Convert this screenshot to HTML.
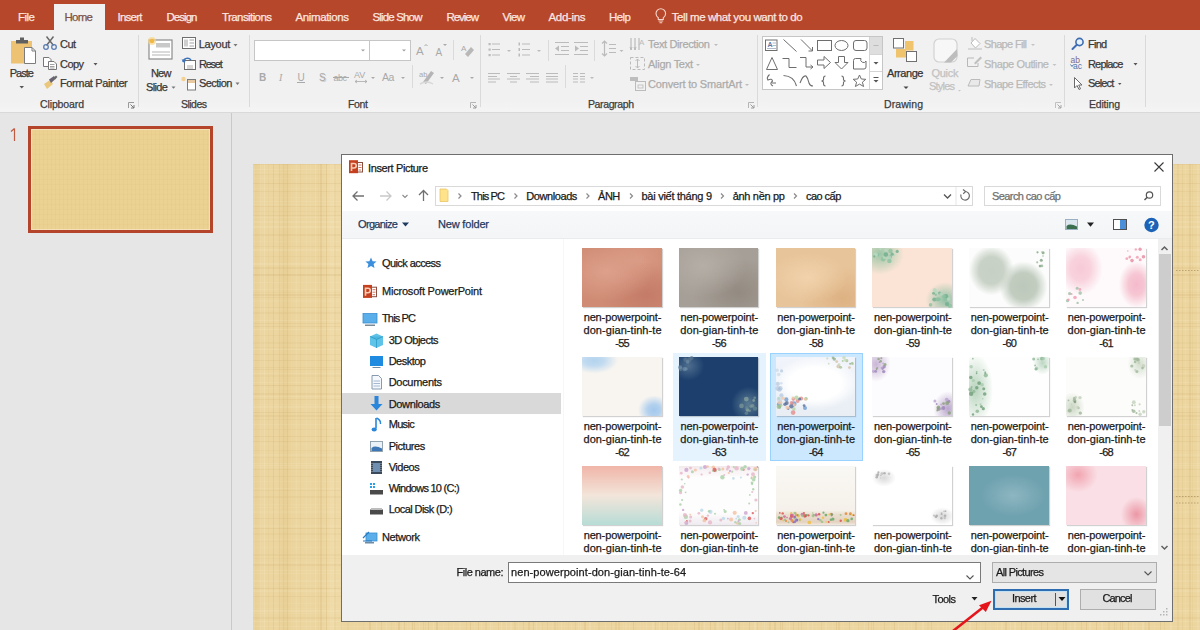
<!DOCTYPE html>
<html><head><meta charset="utf-8">
<style>
*{margin:0;padding:0;box-sizing:border-box}
html,body{width:1200px;height:630px;overflow:hidden;background:#E6E6E6;font-family:"Liberation Sans",sans-serif;position:relative}
.a{position:absolute}
.t{position:absolute;white-space:nowrap;line-height:1;-webkit-text-stroke:0.25px currentColor}
svg{position:absolute;overflow:visible}
</style></head><body>
<div class="a" style="left:0px;top:0px;width:1200px;height:30px;background:#B7472A"></div>
<div class="a" style="left:0px;top:30px;width:1200px;height:82px;background:linear-gradient(#F1F1F1 0,#F1F1F1 70px,#F4F4F4 81px)"></div>
<div class="a" style="left:0px;top:112px;width:1200px;height:1px;background:#D9D9D9"></div>
<div class="a" style="left:54px;top:4px;width:51px;height:27px;background:#F1F1F1"></div>
<div class="t" style="left:18.00px;top:12.00px;font-size:11.5px;color:#FAE6E0;letter-spacing:-0.505px;">File</div>
<div class="t" style="left:117.50px;top:12.00px;font-size:11.5px;color:#FAE6E0;letter-spacing:-0.750px;">Insert</div>
<div class="t" style="left:166.50px;top:12.00px;font-size:11.5px;color:#FAE6E0;letter-spacing:-0.964px;">Design</div>
<div class="t" style="left:222.00px;top:12.00px;font-size:11.5px;color:#FAE6E0;letter-spacing:-0.583px;">Transitions</div>
<div class="t" style="left:295.50px;top:12.00px;font-size:11.5px;color:#FAE6E0;letter-spacing:-0.374px;">Animations</div>
<div class="t" style="left:372.50px;top:12.00px;font-size:11.5px;color:#FAE6E0;letter-spacing:-0.840px;">Slide Show</div>
<div class="t" style="left:446.50px;top:12.00px;font-size:11.5px;color:#FAE6E0;letter-spacing:-1.044px;">Review</div>
<div class="t" style="left:502.50px;top:12.00px;font-size:11.5px;color:#FAE6E0;letter-spacing:-0.742px;">View</div>
<div class="t" style="left:548.50px;top:12.00px;font-size:11.5px;color:#FAE6E0;letter-spacing:-0.331px;">Add-ins</div>
<div class="t" style="left:609.00px;top:12.00px;font-size:11.5px;color:#FAE6E0;letter-spacing:-0.544px;">Help</div>
<div class="t" style="left:671.70px;top:12.00px;font-size:11.5px;color:#FAE6E0;letter-spacing:-0.420px;">Tell me what you want to do</div>
<div class="t" style="left:64.50px;top:12.00px;font-size:11.5px;color:#7E5248;letter-spacing:-0.735px;">Home</div>
<svg style="left:0;top:0" width="1200" height="40"><path d="M658.3 19.5 V17.8 Q656 16.2 656 13.5 A4.8 4.8 0 0 1 665.6 13.5 Q665.6 16.2 663.3 17.8 V19.5 Z" fill="none" stroke="#F6D5CC" stroke-width="1.1"/><path d="M658.5 21 H663.2 M659.5 22.8 H662.2" stroke="#F6D5CC" stroke-width="1.1"/></svg>
<div class="a" style="left:138px;top:35px;width:1px;height:72px;background:#DADADA"></div>
<div class="a" style="left:249px;top:35px;width:1px;height:72px;background:#DADADA"></div>
<div class="a" style="left:480px;top:35px;width:1px;height:72px;background:#DADADA"></div>
<div class="a" style="left:757px;top:35px;width:1px;height:72px;background:#DADADA"></div>
<div class="a" style="left:1064px;top:35px;width:1px;height:72px;background:#DADADA"></div>
<div class="a" style="left:1145px;top:35px;width:1px;height:72px;background:#DADADA"></div>
<div class="t" style="left:40.00px;top:99.00px;font-size:10.5px;color:#3C3C3C;letter-spacing:-0.117px;">Clipboard</div>
<div class="t" style="left:181.00px;top:99.00px;font-size:10.5px;color:#3C3C3C;letter-spacing:-0.523px;">Slides</div>
<div class="t" style="left:348.00px;top:99.00px;font-size:10.5px;color:#3C3C3C;letter-spacing:-0.333px;">Font</div>
<div class="t" style="left:588.00px;top:99.00px;font-size:10.5px;color:#3C3C3C;letter-spacing:-0.379px;">Paragraph</div>
<div class="t" style="left:884.00px;top:99.00px;font-size:10.5px;color:#3C3C3C;letter-spacing:0.078px;">Drawing</div>
<div class="t" style="left:1089.00px;top:99.00px;font-size:10.5px;color:#3C3C3C;letter-spacing:-0.188px;">Editing</div>
<div class="a" style="left:231px;top:113px;width:1px;height:517px;background:#C9C9C9"></div>
<div class="a" style="left:28px;top:126px;width:185px;height:107px;border:3px solid #B4452B;background:repeating-linear-gradient(90deg,rgba(190,150,80,0.07) 0 1px,transparent 1px 4px),repeating-linear-gradient(0deg,rgba(190,150,80,0.05) 0 1px,transparent 1px 5px),#EBD293"></div>
<svg style="left:0;top:0" width="40" height="160"><path d="M14.5 128.5 V141 M11 131.5 L14.5 128.5" stroke="#BF5A43" stroke-width="1.2" fill="none"/></svg>
<div class="a" style="left:31px;top:129px;width:179px;height:101px;border:1px solid rgba(255,235,210,0.6)"></div>
<div class="a" style="left:253px;top:164px;width:1000px;height:500px;background:linear-gradient(90deg,transparent 0px,rgba(255,250,225,0.09) 0px 2px,transparent 2px,transparent 7px,rgba(255,250,225,0.12) 7px 8px,transparent 8px,transparent 9px,rgba(255,250,225,0.06) 9px 10px,transparent 10px,transparent 11px,rgba(255,250,225,0.16) 11px 12px,transparent 12px,transparent 15px,rgba(180,140,70,0.05) 15px 16px,transparent 16px,transparent 20px,rgba(180,140,70,0.13) 20px 21px,transparent 21px,transparent 26px,rgba(180,140,70,0.10) 26px 27px,transparent 27px,transparent 30px,rgba(180,140,70,0.09) 30px 31px,transparent 31px,transparent 34px,rgba(180,140,70,0.12) 34px 35px,transparent 35px,transparent 38px,rgba(255,250,225,0.04) 38px 39px,transparent 39px,transparent 43px,rgba(255,250,225,0.09) 43px 44px,transparent 44px,transparent 47px,rgba(180,140,70,0.07) 47px 48px,transparent 48px,transparent 53px,rgba(255,250,225,0.09) 53px 54px,transparent 54px,transparent 57px,rgba(255,250,225,0.08) 57px 58px,transparent 58px,transparent 62px,rgba(255,250,225,0.13) 62px 63px,transparent 63px,transparent 65px,rgba(180,140,70,0.04) 65px 66px,transparent 66px,transparent 67px,rgba(180,140,70,0.12) 67px 69px,transparent 69px,transparent 73px,rgba(180,140,70,0.16) 73px 74px,transparent 74px,transparent 77px,rgba(255,250,225,0.05) 77px 78px,transparent 78px,transparent 81px,rgba(180,140,70,0.07) 81px 83px,transparent 83px,transparent 88px,rgba(180,140,70,0.07) 88px 89px,transparent 89px,transparent 94px,rgba(180,140,70,0.05) 94px 96px,transparent 96px,transparent 101px,rgba(255,250,225,0.04) 101px 102px,transparent 102px,transparent 104px,rgba(255,250,225,0.05) 104px 105px,transparent 105px,transparent 110px,rgba(180,140,70,0.04) 110px 111px,transparent 111px,transparent 113px,rgba(255,250,225,0.06) 113px 114px,transparent 114px,transparent 116px,rgba(180,140,70,0.14) 116px 118px,transparent 118px,transparent 123px,rgba(255,250,225,0.15) 123px 124px,transparent 124px,transparent 128px,rgba(180,140,70,0.13) 128px 129px,transparent 129px,transparent 133px,rgba(255,250,225,0.15) 133px 134px,transparent 134px,transparent 138px,rgba(180,140,70,0.05) 138px 139px,transparent 139px,transparent 142px,rgba(255,250,225,0.07) 142px 143px,transparent 143px,transparent 145px,rgba(180,140,70,0.15) 145px 147px,transparent 147px,transparent 149px,rgba(255,250,225,0.11) 149px 150px,transparent 150px,transparent 151px,rgba(180,140,70,0.13) 151px 152px,transparent 152px,transparent 154px,rgba(255,250,225,0.07) 154px 155px,transparent 155px,transparent 157px,rgba(255,250,225,0.10) 157px 158px,transparent 158px,transparent 159px,rgba(180,140,70,0.15) 159px 160px,transparent 160px,transparent 161px,rgba(180,140,70,0.11) 161px 162px,transparent 162px,transparent 166px,rgba(255,250,225,0.12) 166px 167px,transparent 167px,transparent 170px,rgba(180,140,70,0.10) 170px 171px,transparent 171px,transparent 172px,rgba(180,140,70,0.05) 172px 173px,transparent 173px,transparent 175px,rgba(180,140,70,0.14) 175px 176px,transparent 176px,transparent 180px,rgba(255,250,225,0.15) 180px 181px,transparent 181px,transparent 183px,rgba(180,140,70,0.14) 183px 185px,transparent 185px,transparent 190px,rgba(255,250,225,0.09) 190px 191px,transparent 191px,transparent 195px,rgba(180,140,70,0.05) 195px 196px,transparent 196px,transparent 200px,rgba(255,250,225,0.13) 200px 201px,transparent 201px,transparent 206px,rgba(255,250,225,0.09) 206px 208px,transparent 208px,transparent 213px,rgba(180,140,70,0.08) 213px 214px,transparent 214px,transparent 217px,rgba(180,140,70,0.15) 217px 218px,transparent 218px,transparent 221px,rgba(255,250,225,0.07) 221px 222px,transparent 222px,transparent 225px,rgba(180,140,70,0.12) 225px 226px,transparent 226px,transparent 228px,rgba(255,250,225,0.12) 228px 229px,transparent 229px,transparent 232px,rgba(180,140,70,0.08) 232px 234px,transparent 234px,transparent 237px,rgba(255,250,225,0.14) 237px 238px,transparent 238px,transparent 239px,rgba(255,250,225,0.07) 239px 240px,transparent 240px,transparent 245px,rgba(180,140,70,0.10) 245px 246px,transparent 246px,transparent 248px,rgba(255,250,225,0.14) 248px 249px,transparent 249px,transparent 253px,rgba(255,250,225,0.15) 253px 254px,transparent 254px,transparent 257px,rgba(255,250,225,0.12) 257px 259px,transparent 259px,transparent 261px,rgba(180,140,70,0.07) 261px 263px,transparent 263px,transparent 265px,rgba(255,250,225,0.11) 265px 266px,transparent 266px,transparent 270px,rgba(180,140,70,0.12) 270px 271px,transparent 271px,transparent 275px,rgba(180,140,70,0.13) 275px 277px,transparent 277px,transparent 280px,rgba(180,140,70,0.14) 280px 281px,transparent 281px,transparent 283px,rgba(255,250,225,0.16) 283px 284px,transparent 284px,transparent 287px,rgba(255,250,225,0.07) 287px 288px,transparent 288px,transparent 289px,rgba(180,140,70,0.06) 289px 290px,transparent 290px,transparent 294px,rgba(180,140,70,0.09) 294px 295px,transparent 295px,transparent 299px,rgba(255,250,225,0.06) 299px 300px,transparent 300px,transparent 301px,rgba(180,140,70,0.09) 301px 303px,transparent 303px,transparent 304px,rgba(180,140,70,0.05) 304px 305px,transparent 305px,transparent 308px,rgba(255,250,225,0.16) 308px 309px,transparent 309px,transparent 311px,rgba(255,250,225,0.07) 311px 312px,transparent 312px,transparent 315px,rgba(180,140,70,0.04) 315px 316px,transparent 316px,transparent 318px,rgba(255,250,225,0.10) 318px 319px,transparent 319px,transparent 322px,rgba(180,140,70,0.09) 322px 323px,transparent 323px,transparent 325px,rgba(255,250,225,0.12) 325px 326px,transparent 326px,transparent 327px,rgba(255,250,225,0.15) 327px 328px,transparent 328px,transparent 331px,rgba(180,140,70,0.13) 331px 333px,transparent 333px,transparent 336px,rgba(255,250,225,0.14) 336px 338px,transparent 338px,transparent 341px,rgba(255,250,225,0.08) 341px 342px,transparent 342px,transparent 345px,rgba(180,140,70,0.08) 345px 347px,transparent 347px,transparent 352px,rgba(255,250,225,0.11) 352px 353px,transparent 353px,transparent 358px,rgba(180,140,70,0.10) 358px 359px,transparent 359px,transparent 362px,rgba(180,140,70,0.10) 362px 364px,transparent 364px,transparent 365px,rgba(180,140,70,0.10) 365px 367px,transparent 367px,transparent 370px,rgba(255,250,225,0.09) 370px 371px,transparent 371px,transparent 372px,rgba(255,250,225,0.10) 372px 374px,transparent 374px,transparent 376px,rgba(255,250,225,0.10) 376px 377px,transparent 377px,transparent 380px,rgba(180,140,70,0.15) 380px 381px,transparent 381px,transparent 382px,rgba(180,140,70,0.04) 382px 383px,transparent 383px,transparent 387px,rgba(255,250,225,0.08) 387px 388px,transparent 388px,transparent 390px,rgba(255,250,225,0.05) 390px 391px,transparent 391px,transparent 393px,rgba(255,250,225,0.13) 393px 394px,transparent 394px,transparent 399px,rgba(255,250,225,0.14) 399px 401px,transparent 401px,transparent 402px,rgba(180,140,70,0.10) 402px 403px,transparent 403px,transparent 406px,rgba(255,250,225,0.15) 406px 407px,transparent 407px,transparent 409px,rgba(180,140,70,0.07) 409px 410px,transparent 410px,transparent 414px,rgba(180,140,70,0.15) 414px 415px,transparent 415px,transparent 420px,rgba(255,250,225,0.09) 420px 421px,transparent 421px,transparent 425px,rgba(255,250,225,0.11) 425px 427px,transparent 427px,transparent 432px,rgba(180,140,70,0.05) 432px 433px,transparent 433px,transparent 435px,rgba(255,250,225,0.05) 435px 436px,transparent 436px,transparent 441px,rgba(180,140,70,0.14) 441px 442px,transparent 442px,transparent 445px,rgba(180,140,70,0.13) 445px 447px,transparent 447px,transparent 448px,rgba(180,140,70,0.05) 448px 450px,transparent 450px,transparent 451px,rgba(255,250,225,0.15) 451px 452px,transparent 452px,transparent 457px,rgba(180,140,70,0.15) 457px 458px,transparent 458px,transparent 461px,rgba(180,140,70,0.08) 461px 463px,transparent 463px,transparent 464px,rgba(255,250,225,0.09) 464px 466px,transparent 466px,transparent 469px,rgba(180,140,70,0.14) 469px 470px,transparent 470px,transparent 471px,rgba(255,250,225,0.13) 471px 472px,transparent 472px,transparent 475px,rgba(180,140,70,0.05) 475px 477px,transparent 477px,transparent 482px,rgba(180,140,70,0.14) 482px 483px,transparent 483px,transparent 485px,rgba(180,140,70,0.10) 485px 487px,transparent 487px,transparent 490px,rgba(255,250,225,0.07) 490px 491px,transparent 491px,transparent 496px,rgba(180,140,70,0.14) 496px 497px,transparent 497px,transparent 501px,rgba(255,250,225,0.15) 501px 503px,transparent 503px,transparent 504px,rgba(180,140,70,0.09) 504px 505px,transparent 505px,transparent 509px,rgba(255,250,225,0.08) 509px 510px,transparent 510px,transparent 511px,rgba(255,250,225,0.16) 511px 512px,transparent 512px,transparent 513px,rgba(255,250,225,0.08) 513px 514px,transparent 514px,transparent 516px,rgba(180,140,70,0.09) 516px 518px,transparent 518px,transparent 521px,rgba(180,140,70,0.13) 521px 523px,transparent 523px,transparent 527px,rgba(180,140,70,0.13) 527px 528px,transparent 528px,transparent 529px,rgba(180,140,70,0.13) 529px 530px,transparent 530px,transparent 533px,rgba(255,250,225,0.07) 533px 535px,transparent 535px,transparent 536px,rgba(255,250,225,0.16) 536px 537px,transparent 537px,transparent 540px,rgba(180,140,70,0.11) 540px 541px,transparent 541px,transparent 545px,rgba(180,140,70,0.09) 545px 546px,transparent 546px,transparent 548px,rgba(180,140,70,0.09) 548px 549px,transparent 549px,transparent 554px,rgba(255,250,225,0.11) 554px 556px,transparent 556px,transparent 559px,rgba(255,250,225,0.12) 559px 560px,transparent 560px,transparent 563px,rgba(255,250,225,0.04) 563px 564px,transparent 564px,transparent 568px,rgba(180,140,70,0.09) 568px 569px,transparent 569px,transparent 572px,rgba(255,250,225,0.13) 572px 574px,transparent 574px,transparent 575px,rgba(255,250,225,0.05) 575px 576px,transparent 576px,transparent 579px,rgba(255,250,225,0.07) 579px 580px,transparent 580px,transparent 583px,rgba(180,140,70,0.15) 583px 584px,transparent 584px,transparent 585px,rgba(180,140,70,0.11) 585px 587px,transparent 587px,transparent 588px,rgba(255,250,225,0.09) 588px 589px,transparent 589px,transparent 590px,rgba(255,250,225,0.10) 590px 591px,transparent 591px,transparent 596px,rgba(180,140,70,0.12) 596px 597px,transparent 597px,transparent 599px,rgba(255,250,225,0.08) 599px 601px,transparent 601px,transparent 605px,rgba(180,140,70,0.07) 605px 606px,transparent 606px,transparent 611px,rgba(255,250,225,0.13) 611px 612px,transparent 612px,transparent 615px,rgba(180,140,70,0.12) 615px 616px,transparent 616px,transparent 618px,rgba(180,140,70,0.10) 618px 619px,transparent 619px,transparent 620px,rgba(180,140,70,0.12) 620px 621px,transparent 621px,transparent 626px,rgba(255,250,225,0.04) 626px 627px,transparent 627px,transparent 629px,rgba(255,250,225,0.05) 629px 630px,transparent 630px,transparent 631px,rgba(180,140,70,0.11) 631px 632px,transparent 632px,transparent 637px,rgba(255,250,225,0.07) 637px 638px,transparent 638px,transparent 641px,rgba(180,140,70,0.14) 641px 642px,transparent 642px,transparent 645px,rgba(255,250,225,0.14) 645px 646px,transparent 646px,transparent 651px,rgba(255,250,225,0.09) 651px 652px,transparent 652px,transparent 655px,rgba(255,250,225,0.07) 655px 656px,transparent 656px,transparent 658px,rgba(255,250,225,0.11) 658px 659px,transparent 659px,transparent 662px,rgba(180,140,70,0.11) 662px 664px,transparent 664px,transparent 669px,rgba(255,250,225,0.14) 669px 671px,transparent 671px,transparent 674px,rgba(180,140,70,0.05) 674px 676px,transparent 676px,transparent 678px,rgba(180,140,70,0.12) 678px 679px,transparent 679px,transparent 684px,rgba(255,250,225,0.07) 684px 686px,transparent 686px,transparent 690px,rgba(255,250,225,0.08) 690px 691px,transparent 691px,transparent 693px,rgba(255,250,225,0.11) 693px 694px,transparent 694px,transparent 696px,rgba(255,250,225,0.09) 696px 697px,transparent 697px,transparent 700px,rgba(180,140,70,0.05) 700px 701px,transparent 701px,transparent 703px,rgba(255,250,225,0.11) 703px 704px,transparent 704px,transparent 705px,rgba(255,250,225,0.14) 705px 706px,transparent 706px,transparent 710px,rgba(180,140,70,0.06) 710px 711px,transparent 711px,transparent 716px,rgba(255,250,225,0.14) 716px 718px,transparent 718px,transparent 723px,rgba(180,140,70,0.11) 723px 724px,transparent 724px,transparent 727px,rgba(255,250,225,0.05) 727px 728px,transparent 728px,transparent 732px,rgba(180,140,70,0.08) 732px 733px,transparent 733px,transparent 737px,rgba(255,250,225,0.05) 737px 738px,transparent 738px,transparent 742px,rgba(255,250,225,0.07) 742px 743px,transparent 743px,transparent 744px,rgba(255,250,225,0.13) 744px 745px,transparent 745px,transparent 748px,rgba(255,250,225,0.12) 748px 750px,transparent 750px,transparent 752px,rgba(180,140,70,0.12) 752px 754px,transparent 754px,transparent 757px,rgba(255,250,225,0.14) 757px 758px,transparent 758px,transparent 761px,rgba(255,250,225,0.15) 761px 763px,transparent 763px,transparent 768px,rgba(180,140,70,0.14) 768px 769px,transparent 769px,transparent 772px,rgba(180,140,70,0.07) 772px 774px,transparent 774px,transparent 779px,rgba(255,250,225,0.12) 779px 780px,transparent 780px,transparent 785px,rgba(255,250,225,0.10) 785px 786px,transparent 786px,transparent 788px,rgba(180,140,70,0.10) 788px 789px,transparent 789px,transparent 794px,rgba(180,140,70,0.13) 794px 795px,transparent 795px,transparent 797px,rgba(255,250,225,0.04) 797px 798px,transparent 798px,transparent 803px,rgba(180,140,70,0.08) 803px 805px,transparent 805px,transparent 810px,rgba(180,140,70,0.11) 810px 811px,transparent 811px,transparent 812px,rgba(180,140,70,0.09) 812px 814px,transparent 814px,transparent 817px,rgba(255,250,225,0.12) 817px 818px,transparent 818px,transparent 821px,rgba(255,250,225,0.15) 821px 823px,transparent 823px,transparent 828px,rgba(180,140,70,0.10) 828px 829px,transparent 829px,transparent 833px,rgba(180,140,70,0.15) 833px 834px,transparent 834px,transparent 836px,rgba(255,250,225,0.13) 836px 838px,transparent 838px,transparent 843px,rgba(180,140,70,0.15) 843px 844px,transparent 844px,transparent 848px,rgba(255,250,225,0.14) 848px 850px,transparent 850px,transparent 855px,rgba(180,140,70,0.09) 855px 857px,transparent 857px,transparent 861px,rgba(180,140,70,0.12) 861px 862px,transparent 862px,transparent 863px,rgba(180,140,70,0.06) 863px 864px,transparent 864px,transparent 867px,rgba(180,140,70,0.14) 867px 868px,transparent 868px,transparent 869px,rgba(180,140,70,0.15) 869px 870px,transparent 870px,transparent 872px,rgba(255,250,225,0.04) 872px 874px,transparent 874px,transparent 875px,rgba(180,140,70,0.13) 875px 876px,transparent 876px,transparent 879px,rgba(255,250,225,0.10) 879px 881px,transparent 881px,transparent 883px,rgba(255,250,225,0.08) 883px 884px,transparent 884px,transparent 889px,rgba(255,250,225,0.16) 889px 891px,transparent 891px,transparent 892px,rgba(180,140,70,0.05) 892px 893px,transparent 893px,transparent 895px,rgba(180,140,70,0.12) 895px 897px,transparent 897px,transparent 901px,rgba(255,250,225,0.07) 901px 902px,transparent 902px,transparent 907px,rgba(180,140,70,0.14) 907px 908px,transparent 908px,transparent 911px,rgba(180,140,70,0.07) 911px 912px,transparent 912px,transparent 917px,rgba(255,250,225,0.15) 917px 919px,transparent 919px,transparent 924px,rgba(180,140,70,0.07) 924px 926px,transparent 926px,transparent 929px,rgba(180,140,70,0.08) 929px 930px,transparent 930px,transparent 932px,rgba(255,250,225,0.09) 932px 933px,transparent 933px,transparent 936px,rgba(180,140,70,0.11) 936px 938px,transparent 938px,transparent 939px,rgba(180,140,70,0.06) 939px 940px,transparent 940px,transparent 944px,rgba(255,250,225,0.11) 944px 946px,transparent 946px,transparent 947px,rgba(180,140,70,0.06) 947px 948px,transparent 948px,transparent 949px,rgba(180,140,70,0.08) 949px 950px,transparent 950px,transparent 953px,rgba(180,140,70,0.12) 953px 955px,transparent 955px,transparent 960px,rgba(255,250,225,0.10) 960px 961px,transparent 961px,transparent 966px,rgba(255,250,225,0.11) 966px 968px,transparent 968px,transparent 972px,rgba(180,140,70,0.12) 972px 973px,transparent 973px,transparent 978px,rgba(180,140,70,0.08) 978px 979px,transparent 979px,transparent 981px,rgba(255,250,225,0.06) 981px 983px,transparent 983px,transparent 984px,rgba(180,140,70,0.11) 984px 985px,transparent 985px,transparent 989px,rgba(255,250,225,0.11) 989px 990px,transparent 990px,transparent 992px,rgba(180,140,70,0.11) 992px 993px,transparent 993px,transparent 997px,rgba(180,140,70,0.11) 997px 998px,transparent 998px),linear-gradient(180deg,transparent 0px,rgba(180,140,70,0.11) 0px 1px,transparent 1px,transparent 5px,rgba(255,250,225,0.10) 5px 6px,transparent 6px,transparent 8px,rgba(255,250,225,0.06) 8px 9px,transparent 9px,transparent 10px,rgba(180,140,70,0.06) 10px 11px,transparent 11px,transparent 14px,rgba(255,250,225,0.06) 14px 15px,transparent 15px,transparent 19px,rgba(180,140,70,0.12) 19px 20px,transparent 20px,transparent 24px,rgba(255,250,225,0.06) 24px 25px,transparent 25px,transparent 27px,rgba(180,140,70,0.09) 27px 28px,transparent 28px,transparent 33px,rgba(255,250,225,0.06) 33px 34px,transparent 34px,transparent 37px,rgba(255,250,225,0.10) 37px 38px,transparent 38px,transparent 40px,rgba(255,250,225,0.08) 40px 41px,transparent 41px,transparent 42px,rgba(180,140,70,0.09) 42px 43px,transparent 43px,transparent 47px,rgba(180,140,70,0.06) 47px 48px,transparent 48px,transparent 51px,rgba(180,140,70,0.10) 51px 52px,transparent 52px,transparent 53px,rgba(255,250,225,0.09) 53px 54px,transparent 54px,transparent 57px,rgba(255,250,225,0.11) 57px 59px,transparent 59px,transparent 62px,rgba(255,250,225,0.12) 62px 64px,transparent 64px,transparent 70px,rgba(180,140,70,0.09) 70px 72px,transparent 72px,transparent 77px,rgba(255,250,225,0.08) 77px 78px,transparent 78px,transparent 82px,rgba(180,140,70,0.07) 82px 83px,transparent 83px,transparent 85px,rgba(255,250,225,0.11) 85px 87px,transparent 87px,transparent 92px,rgba(180,140,70,0.06) 92px 93px,transparent 93px,transparent 99px,rgba(255,250,225,0.13) 99px 101px,transparent 101px,transparent 103px,rgba(180,140,70,0.09) 103px 105px,transparent 105px,transparent 110px,rgba(180,140,70,0.13) 110px 112px,transparent 112px,transparent 118px,rgba(255,250,225,0.09) 118px 119px,transparent 119px,transparent 125px,rgba(255,250,225,0.09) 125px 126px,transparent 126px,transparent 128px,rgba(180,140,70,0.05) 128px 129px,transparent 129px,transparent 130px,rgba(180,140,70,0.11) 130px 132px,transparent 132px,transparent 133px,rgba(180,140,70,0.08) 133px 134px,transparent 134px,transparent 136px,rgba(255,250,225,0.05) 136px 138px,transparent 138px,transparent 143px,rgba(180,140,70,0.08) 143px 144px,transparent 144px,transparent 145px,rgba(255,250,225,0.05) 145px 146px,transparent 146px,transparent 148px,rgba(180,140,70,0.07) 148px 150px,transparent 150px,transparent 156px,rgba(255,250,225,0.12) 156px 157px,transparent 157px,transparent 159px,rgba(180,140,70,0.09) 159px 160px,transparent 160px,transparent 162px,rgba(180,140,70,0.10) 162px 163px,transparent 163px,transparent 165px,rgba(255,250,225,0.13) 165px 166px,transparent 166px,transparent 171px,rgba(180,140,70,0.07) 171px 172px,transparent 172px,transparent 178px,rgba(180,140,70,0.06) 178px 180px,transparent 180px,transparent 183px,rgba(180,140,70,0.06) 183px 184px,transparent 184px,transparent 185px,rgba(255,250,225,0.11) 185px 186px,transparent 186px,transparent 190px,rgba(180,140,70,0.09) 190px 191px,transparent 191px,transparent 196px,rgba(180,140,70,0.10) 196px 197px,transparent 197px,transparent 203px,rgba(180,140,70,0.08) 203px 204px,transparent 204px,transparent 205px,rgba(180,140,70,0.09) 205px 206px,transparent 206px,transparent 209px,rgba(255,250,225,0.09) 209px 210px,transparent 210px,transparent 211px,rgba(180,140,70,0.05) 211px 213px,transparent 213px,transparent 218px,rgba(255,250,225,0.11) 218px 219px,transparent 219px,transparent 221px,rgba(180,140,70,0.13) 221px 222px,transparent 222px,transparent 224px,rgba(255,250,225,0.04) 224px 225px,transparent 225px,transparent 229px,rgba(180,140,70,0.09) 229px 231px,transparent 231px,transparent 232px,rgba(255,250,225,0.11) 232px 233px,transparent 233px,transparent 235px,rgba(180,140,70,0.09) 235px 236px,transparent 236px,transparent 240px,rgba(255,250,225,0.06) 240px 241px,transparent 241px,transparent 242px,rgba(255,250,225,0.11) 242px 244px,transparent 244px,transparent 248px,rgba(180,140,70,0.12) 248px 249px,transparent 249px,transparent 251px,rgba(180,140,70,0.09) 251px 253px,transparent 253px,transparent 255px,rgba(180,140,70,0.07) 255px 256px,transparent 256px,transparent 260px,rgba(255,250,225,0.09) 260px 261px,transparent 261px,transparent 265px,rgba(180,140,70,0.05) 265px 266px,transparent 266px,transparent 272px,rgba(180,140,70,0.10) 272px 273px,transparent 273px,transparent 277px,rgba(180,140,70,0.10) 277px 278px,transparent 278px,transparent 280px,rgba(255,250,225,0.05) 280px 281px,transparent 281px,transparent 286px,rgba(180,140,70,0.05) 286px 287px,transparent 287px,transparent 290px,rgba(255,250,225,0.08) 290px 292px,transparent 292px,transparent 293px,rgba(180,140,70,0.05) 293px 294px,transparent 294px,transparent 299px,rgba(255,250,225,0.09) 299px 300px,transparent 300px,transparent 301px,rgba(255,250,225,0.12) 301px 302px,transparent 302px,transparent 303px,rgba(255,250,225,0.08) 303px 304px,transparent 304px,transparent 305px,rgba(180,140,70,0.07) 305px 306px,transparent 306px,transparent 312px,rgba(180,140,70,0.08) 312px 313px,transparent 313px,transparent 317px,rgba(255,250,225,0.07) 317px 318px,transparent 318px,transparent 324px,rgba(255,250,225,0.09) 324px 325px,transparent 325px,transparent 326px,rgba(180,140,70,0.08) 326px 327px,transparent 327px,transparent 332px,rgba(180,140,70,0.07) 332px 334px,transparent 334px,transparent 340px,rgba(255,250,225,0.06) 340px 341px,transparent 341px,transparent 343px,rgba(255,250,225,0.06) 343px 344px,transparent 344px,transparent 347px,rgba(255,250,225,0.08) 347px 349px,transparent 349px,transparent 354px,rgba(180,140,70,0.09) 354px 355px,transparent 355px,transparent 361px,rgba(255,250,225,0.07) 361px 363px,transparent 363px,transparent 364px,rgba(180,140,70,0.11) 364px 365px,transparent 365px,transparent 369px,rgba(180,140,70,0.06) 369px 371px,transparent 371px,transparent 375px,rgba(255,250,225,0.05) 375px 376px,transparent 376px,transparent 377px,rgba(180,140,70,0.04) 377px 378px,transparent 378px,transparent 383px,rgba(255,250,225,0.05) 383px 384px,transparent 384px,transparent 390px,rgba(180,140,70,0.07) 390px 392px,transparent 392px,transparent 394px,rgba(180,140,70,0.05) 394px 395px,transparent 395px,transparent 398px,rgba(255,250,225,0.08) 398px 399px,transparent 399px,transparent 400px,rgba(180,140,70,0.09) 400px 402px,transparent 402px,transparent 406px,rgba(255,250,225,0.10) 406px 407px,transparent 407px,transparent 409px,rgba(255,250,225,0.09) 409px 410px,transparent 410px,transparent 416px,rgba(255,250,225,0.09) 416px 418px,transparent 418px,transparent 421px,rgba(255,250,225,0.07) 421px 422px,transparent 422px,transparent 424px,rgba(180,140,70,0.11) 424px 425px,transparent 425px,transparent 426px,rgba(255,250,225,0.10) 426px 428px,transparent 428px,transparent 432px,rgba(180,140,70,0.09) 432px 433px,transparent 433px,transparent 439px,rgba(255,250,225,0.06) 439px 440px,transparent 440px,transparent 444px,rgba(255,250,225,0.05) 444px 445px,transparent 445px,transparent 446px,rgba(255,250,225,0.12) 446px 448px,transparent 448px,transparent 449px,rgba(255,250,225,0.06) 449px 450px,transparent 450px,transparent 453px,rgba(180,140,70,0.07) 453px 455px,transparent 455px,transparent 457px,rgba(255,250,225,0.12) 457px 458px,transparent 458px,transparent 462px,rgba(255,250,225,0.10) 462px 463px,transparent 463px,transparent 466px,rgba(180,140,70,0.12) 466px 467px,transparent 467px,transparent 472px,rgba(180,140,70,0.12) 472px 473px,transparent 473px,transparent 476px,rgba(255,250,225,0.12) 476px 477px,transparent 477px,transparent 478px,rgba(255,250,225,0.12) 478px 479px,transparent 479px,transparent 482px,rgba(255,250,225,0.07) 482px 483px,transparent 483px,transparent 484px,rgba(255,250,225,0.11) 484px 485px,transparent 485px,transparent 489px,rgba(255,250,225,0.10) 489px 490px,transparent 490px,transparent 494px,rgba(180,140,70,0.11) 494px 495px,transparent 495px,transparent 496px,rgba(255,250,225,0.10) 496px 497px,transparent 497px),linear-gradient(90deg,rgba(215,180,105,0.20) 0,transparent 10px,transparent 24px,rgba(215,180,105,0.18) 32px,transparent 42px,transparent 70px,rgba(255,245,210,0.2) 80px,transparent 92px),#ECD59F"></div>
<svg style="left:0;top:0" width="1200" height="630"><path d="M1176 270.5 H1200 M1176 496.5 H1200 M1176 503 H1200" stroke="#A89060" stroke-width="1" stroke-dasharray="1.5 1.5" opacity="0.7"/></svg>
<div class="a" style="left:341px;top:154px;width:832px;height:468px;background:#fff;border:1px solid #6E6E6E"></div>
<svg style="left:0;top:0" width="1200" height="112" viewBox="0 0 1200 112">
<g id="clip">
 <rect x="11" y="41" width="21" height="22.5" fill="#EDC272"/>
 <path d="M16 43.5 L16 40 L20 40 L20 37.5 L24 37.5 L24 40 L28 40 L28 43.5 Z" fill="#606060"/>
 <path d="M24.5 47.5 H32 L35.5 51 V63.5 H24.5 Z" fill="#fff" stroke="#7C7C7C" stroke-width="1"/>
 <path d="M32 47.5 V51 H35.5" fill="none" stroke="#7C7C7C" stroke-width="1"/>
 <path d="M19.5 86 H24 L21.75 88.5 Z" fill="#555"/>
 <!-- scissors -->
 <path d="M46.5 36.5 L53.5 45.5 M53.5 36.5 L46.5 45.5" stroke="#6A6A6A" stroke-width="1.5" fill="none"/>
 <circle cx="46" cy="47" r="2.3" fill="none" stroke="#5B7DB3" stroke-width="1.3"/>
 <circle cx="54" cy="47" r="2.3" fill="none" stroke="#5B7DB3" stroke-width="1.3"/>
 <!-- copy -->
 <path d="M43.5 57.5 H49 L51 59.5 V66.5 H43.5 Z" fill="#fff" stroke="#777" stroke-width="1"/>
 <path d="M48.5 61.5 H54 L56.5 64 V69.5 H48.5 Z" fill="#fff" stroke="#777" stroke-width="1"/>
 <path d="M50 64.5 H54.5 M50 66.5 H54.5 M50 68 H54.5" stroke="#8a8a8a" stroke-width="0.8"/>
 <path d="M93.5 63 H97.5 L95.5 65.5 Z" fill="#555"/>
 <!-- format painter -->
 <path d="M44 84 L50 80 L53 84 L47 89 Z" fill="#EAC77A"/>
 <path d="M49 79.5 L54 76 L56 78.5 L51 83 Z" fill="#6A6470"/>
 <path d="M53.5 78 L56 75.5 L57.5 77 L55 79.5 Z" fill="#6A6A6A"/>
 <!-- launcher -->
 <path d="M128.5 108 V102.5 H134 " fill="none" stroke="#9A9A9A" stroke-width="1"/>
 <path d="M130.5 104.5 L134 108 M131 108 H134 V105" fill="none" stroke="#777" stroke-width="1"/>
</g>
<g id="slides">
 <rect x="149" y="40" width="23" height="19" fill="#fff" stroke="#8C8C8C" stroke-width="1.2"/>
 <rect x="156" y="43" width="14" height="4.5" fill="#C9C9C9"/>
 <path d="M152 52 H170 M152 55 H170" stroke="#B5B5B5" stroke-width="1"/>
 <circle cx="152" cy="41" r="4" fill="#F7D58A" opacity="0.7"/>
 <circle cx="152" cy="41" r="2.2" fill="#F2B844"/>
 <path d="M171.5 86.5 H175.5 L173.5 88.7 Z" fill="#777"/>
 <!-- layout -->
 <rect x="182.5" y="37.5" width="13" height="11" fill="#fff" stroke="#6E6E6E" stroke-width="1"/>
 <rect x="184" y="39.5" width="4" height="7" fill="#CFCFCF"/>
 <path d="M189.5 40 H194 M189.5 43 H194 M189.5 46 H194" stroke="#8A8A8A" stroke-width="0.8"/>
 <path d="M233.5 44 H237.5 L235.5 46.5 Z" fill="#777"/>
 <!-- reset -->
 <rect x="184.5" y="60.5" width="11" height="9" fill="#fff" stroke="#6E6E6E" stroke-width="1"/>
 <path d="M187 66 H193 M187 68 H193" stroke="#9A9A9A" stroke-width="0.8"/>
 <path d="M183 62 A4.5 4.5 0 0 1 191 60" fill="none" stroke="#3F73B8" stroke-width="1.5"/>
 <path d="M181.5 59.5 L184.5 63.5 L186 59.5 Z" fill="#3F73B8"/>
 <!-- section -->
 <rect x="187.5" y="79.5" width="8" height="10.5" fill="#fff" stroke="#7A7A7A" stroke-width="1"/>
 <rect x="188" y="80" width="7" height="3" fill="#E8C9A0"/>
 <circle cx="183.5" cy="79" r="2.2" fill="#F4C97A" opacity="0.8"/>
 <path d="M235.5 82.5 H239.5 L237.5 85 Z" fill="#777"/>
</g>
</svg>
<div class="t" style="left:9.80px;top:68.00px;font-size:11px;color:#383838;letter-spacing:-1.026px;">Paste</div>
<div class="t" style="left:60.00px;top:39.00px;font-size:11px;color:#383838;letter-spacing:-0.553px;">Cut</div>
<div class="t" style="left:60.00px;top:59.00px;font-size:11px;color:#383838;letter-spacing:-0.562px;">Copy</div>
<div class="t" style="left:60.00px;top:78.00px;font-size:11px;color:#383838;letter-spacing:-0.382px;">Format Painter</div>
<div class="t" style="left:151.00px;top:68.00px;font-size:11px;color:#383838;letter-spacing:-0.828px;">New</div>
<div class="t" style="left:146.00px;top:82.00px;font-size:11px;color:#383838;letter-spacing:-0.619px;">Slide</div>
<div class="t" style="left:198.80px;top:39.00px;font-size:11px;color:#383838;letter-spacing:-0.311px;">Layout</div>
<div class="t" style="left:199.00px;top:59.00px;font-size:11px;color:#383838;letter-spacing:-1.253px;">Reset</div>
<div class="t" style="left:199.00px;top:78.00px;font-size:11px;color:#383838;letter-spacing:-0.548px;">Section</div>
<svg style="left:0;top:0" width="1200" height="112" viewBox="0 0 1200 112" font-family="Liberation Sans">
 <rect x="254.5" y="40.5" width="115" height="20" fill="#fff" stroke="#C6C6C6"/>
 <rect x="369.5" y="40.5" width="41" height="20" fill="#fff" stroke="#C6C6C6"/>
 <path d="M361 49.5 H365 L363 51.5 Z M402 49.5 H406 L404 51.5 Z" fill="#A0A0A0"/>
 <text x="416" y="55" font-size="11.5" fill="#A9A9A9">A</text>
 <path d="M424.5 46 L426 44.5 L427.5 46" stroke="#A9A9A9" fill="none"/>
 <text x="435.5" y="55.5" font-size="10" fill="#A9A9A9">A</text>
 <path d="M443 44 H447 L445 46 Z" fill="#A9A9A9"/>
 <rect x="453" y="40" width="1" height="20" fill="#DADADA"/>
 <text x="461" y="51" font-size="8" fill="#A9A9A9">A</text>
 <path d="M465 54 L471 47 L474 50 L468 57 Z" fill="#B8B8B8"/>
 <text x="259" y="80.5" font-size="10" font-weight="bold" fill="#A9A9A9">B</text>
 <text x="279" y="80.5" font-size="10" font-style="italic" font-family="Liberation Serif" fill="#A9A9A9">I</text>
 <text x="297.5" y="80.5" font-size="10" fill="#A9A9A9">U</text>
 <rect x="297" y="82" width="8" height="1" fill="#A9A9A9"/>
 <text x="320" y="81.5" font-size="10" fill="#CFCFCF">S</text>
 <text x="319" y="80.5" font-size="10" fill="#A9A9A9">S</text>
 <text x="333.5" y="80.5" font-size="9" fill="#A9A9A9" letter-spacing="-0.5">abc</text>
 <rect x="333" y="77" width="16" height="1" fill="#A9A9A9"/>
 <text x="354" y="78" font-size="9" fill="#A9A9A9">AV</text>
 <path d="M355 81.5 H367 M355 81.5 L357 80 M355 81.5 L357 83 M367 81.5 L365 80 M367 81.5 L365 83" stroke="#A9A9A9" stroke-width="0.8" fill="none"/>
 <path d="M371 77 H375 L373 79 Z M401 77 H405 L403 79 Z" fill="#A9A9A9"/>
 <text x="382" y="81" font-size="10.5" fill="#A9A9A9" letter-spacing="-0.6">Aa</text>
 <rect x="412" y="65" width="1" height="23" fill="#DADADA"/>
 <text x="419" y="77" font-size="7.5" fill="#A9A9A9">ab</text>
 <path d="M423 82 L431 71 L434 73 L426 84 Z" fill="#B5B5B5"/>
 <path d="M420 84 Q427 80 433 84" stroke="#D8D8D8" stroke-width="1.5" fill="none"/>
 <path d="M440 77 H444 L442 79 Z M470 77 H474 L472 79 Z" fill="#A9A9A9"/>
 <text x="452" y="81.5" font-size="11.5" fill="#A9A9A9">A</text>
 <path d="M470.5 108 V102.5 H476" fill="none" stroke="#B5B5B5" stroke-width="1"/>
 <path d="M472.5 104.5 L476 108 M473 108 H476 V105" fill="none" stroke="#9a9a9a" stroke-width="1"/>
</svg>
<svg style="left:0;top:0" width="1200" height="112" viewBox="0 0 1200 112" font-family="Liberation Sans"><rect x="488.5" y="43" width="2.2" height="2.2" fill="#BBBBBB"/><rect x="492" y="43.5" width="8" height="1" fill="#BBBBBB"/><rect x="518.5" y="42.5" width="1.5" height="3" fill="#BBBBBB"/><rect x="522" y="43.5" width="8" height="1" fill="#BBBBBB"/><rect x="488.5" y="48.5" width="2.2" height="2.2" fill="#BBBBBB"/><rect x="492" y="49.0" width="8" height="1" fill="#BBBBBB"/><rect x="518.5" y="48.0" width="1.5" height="3" fill="#BBBBBB"/><rect x="522" y="49.0" width="8" height="1" fill="#BBBBBB"/><rect x="488.5" y="54" width="2.2" height="2.2" fill="#BBBBBB"/><rect x="492" y="54.5" width="8" height="1" fill="#BBBBBB"/><rect x="518.5" y="53.5" width="1.5" height="3" fill="#BBBBBB"/><rect x="522" y="54.5" width="8" height="1" fill="#BBBBBB"/><path d="M507 50 H511 L509 52 Z M537 50 H541 L539 52 Z M619.5 50 H623.5 L621.5 52 Z M590 77 H594 L592 79 Z" fill="#BBBBBB"/><rect x="548" y="40" width="1" height="21" fill="#DADADA"/><rect x="594" y="40" width="1" height="21" fill="#DADADA"/><rect x="565" y="65" width="1" height="23" fill="#DADADA"/><rect x="555" y="42" width="14" height="1" fill="#BBBBBB"/><rect x="561" y="46" width="8" height="1" fill="#BBBBBB"/><rect x="561" y="50" width="8" height="1" fill="#BBBBBB"/><rect x="555" y="54" width="14" height="1" fill="#BBBBBB"/><path d="M555 48.5 L559 45.5 V51.5 Z" fill="#BBBBBB"/><rect x="574" y="42" width="14" height="1" fill="#BBBBBB"/><rect x="580" y="46" width="8" height="1" fill="#BBBBBB"/><rect x="580" y="50" width="8" height="1" fill="#BBBBBB"/><rect x="574" y="54" width="14" height="1" fill="#BBBBBB"/><path d="M579 48.5 L575 45.5 V51.5 Z" fill="#BBBBBB"/><path d="M604.5 41 V56 M602 43.5 L604.5 41 L607 43.5 M602 53.5 L604.5 56 L607 53.5" stroke="#BBBBBB" fill="none" stroke-width="1.2"/><rect x="609" y="44" width="7" height="1" fill="#BBBBBB"/><rect x="609" y="48" width="7" height="1" fill="#BBBBBB"/><rect x="609" y="52" width="7" height="1" fill="#BBBBBB"/><rect x="488" y="73" width="12" height="1" fill="#BBBBBB"/><rect x="488" y="76" width="9" height="1" fill="#BBBBBB"/><rect x="488" y="78.5" width="12" height="1" fill="#BBBBBB"/><rect x="488" y="81.5" width="8" height="1" fill="#BBBBBB"/><rect x="507" y="73" width="13" height="1" fill="#BBBBBB"/><rect x="510" y="76" width="7" height="1" fill="#BBBBBB"/><rect x="507" y="78.5" width="13" height="1" fill="#BBBBBB"/><rect x="510" y="81.5" width="7" height="1" fill="#BBBBBB"/><rect x="526" y="73" width="13" height="1" fill="#BBBBBB"/><rect x="530" y="76" width="9" height="1" fill="#BBBBBB"/><rect x="526" y="78.5" width="13" height="1" fill="#BBBBBB"/><rect x="530" y="81.5" width="9" height="1" fill="#BBBBBB"/><rect x="546" y="73" width="12" height="1" fill="#BBBBBB"/><rect x="546" y="76" width="12" height="1" fill="#BBBBBB"/><rect x="546" y="78.5" width="12" height="1" fill="#BBBBBB"/><rect x="546" y="81.5" width="12" height="1" fill="#BBBBBB"/><rect x="573" y="73" width="5" height="1" fill="#BBBBBB"/><rect x="580" y="73" width="5" height="1" fill="#BBBBBB"/><rect x="573" y="76" width="5" height="1" fill="#BBBBBB"/><rect x="580" y="76" width="5" height="1" fill="#BBBBBB"/><rect x="573" y="78.5" width="5" height="1" fill="#BBBBBB"/><rect x="580" y="78.5" width="5" height="1" fill="#BBBBBB"/><rect x="573" y="81.5" width="5" height="1" fill="#BBBBBB"/><rect x="580" y="81.5" width="5" height="1" fill="#BBBBBB"/><path d="M631 38 V50 M635 38 V50 M639 38 V50" stroke="#BBBBBB" stroke-width="1.2"/><path d="M630 47 L631 50 L632 47 M634 47 L635 50 L636 47" stroke="#BBBBBB" fill="none"/><text x="639" y="45" font-size="8" fill="#BBBBBB" font-family="Liberation Sans">A</text><rect x="630.5" y="57.5" width="14" height="12" fill="none" stroke="#BBBBBB" stroke-dasharray="3 2"/><path d="M637.5 59 V68 M635.5 61 L637.5 59 L639.5 61 M635.5 66 L637.5 68 L639.5 66" stroke="#BBBBBB" fill="none"/><rect x="630" y="77" width="8" height="4" fill="#BDBDBD"/><rect x="635.5" y="81.5" width="10" height="9" fill="none" stroke="#BBBBBB"/><rect x="638" y="85" width="5" height="3" fill="none" stroke="#BBBBBB" stroke-width="0.8"/><path d="M748.5 108 V102.5 H754" fill="none" stroke="#B5B5B5"/><path d="M750.5 104.5 L754 108 M751 108 H754 V105" fill="none" stroke="#9a9a9a"/></svg>
<div class="t" style="left:648.00px;top:39.00px;font-size:11px;color:#ABABAB;letter-spacing:-0.358px;">Text Direction</div>
<div class="t" style="left:648.00px;top:59.00px;font-size:11px;color:#ABABAB;letter-spacing:-0.280px;">Align Text</div>
<div class="t" style="left:648.00px;top:79.00px;font-size:11px;color:#ABABAB;letter-spacing:-0.177px;">Convert to SmartArt</div>
<svg style="left:0;top:0" width="1200" height="112"><path d="M714 44 H718 L716 46 Z M696 64 H700 L698 66 Z M745 84 H749 L747 86 Z" fill="#BBBBBB"/></svg>
<svg style="left:0;top:0" width="1200" height="112" viewBox="0 0 1200 112" font-family="Liberation Sans">
 <rect x="762.5" y="36.5" width="120" height="53" fill="#fff" stroke="#C6C6C6"/>
 <rect x="869.5" y="37" width="12.5" height="17.5" fill="#DEDEDE"/>
 <path d="M869.5 37 V89 M869.5 54.5 H882 M869.5 71.5 H882" stroke="#D4D4D4" fill="none"/>
 <rect x="873.5" y="45" width="5" height="1" fill="#BBBBBB"/>
 <path d="M873.5 62 H878.5 L876 64.5 Z" fill="#555"/>
 <rect x="873.5" y="77" width="5" height="1" fill="#555"/>
 <path d="M873.5 80 H878.5 L876 82.5 Z" fill="#555"/>
 <g fill="none" stroke="#6E6E6E" stroke-width="1">
  <rect x="765.5" y="40" width="11.5" height="10.5"/>
  <path d="M783.5 39.5 L796.5 51.5"/>
  <path d="M801 39.5 L812.5 51 M812.5 47 V51 H808.5"/>
  <rect x="817.5" y="40.5" width="14" height="10"/>
  <ellipse cx="841.5" cy="45.5" rx="6.5" ry="5"/>
  <rect x="853.5" y="40.5" width="13.5" height="10" rx="2.5"/>
  <path d="M772 57.5 L766.5 69.5 H777.5 Z"/>
  <path d="M782.5 58.5 H789 V67.5 H796.5"/>
  <path d="M800 57.5 H806 V67 H813 M810.5 65 L813 67 L810.5 69"/>
  <path d="M817.5 60 H824 V56.5 L830.5 62.5 L824 68.5 V65 H817.5 Z"/>
  <path d="M838.5 56.5 H844.5 V62.5 H848 L841.5 69 L835 62.5 H838.5 Z"/>
  <path d="M853.5 69 V60.5 Q853.5 58.5 855.5 58.5 H861 A2.5 2.5 0 0 0 866 61 V67 Q866 69 864 69 Z"/>
  <path d="M769.5 74.5 Q766 78 768 80 Q772 78 772.5 81 Q769 84 773 86 M772 83 H776" stroke-width="1.1"/>
  <path d="M783.5 75.5 Q794 76 796.5 86" stroke-width="1.1"/>
  <path d="M800 83 Q803 75 806 76 Q808 78 809 83 Q810 86 813 86" stroke-width="1.1"/>
  <path d="M825.5 76 Q823.5 76 823.5 78.5 V80 L822 81 L823.5 82 V83.5 Q823.5 86 825.5 86" stroke-width="1.1"/>
  <path d="M841.5 76 Q843.5 76 843.5 78.5 V80 L845 81 L843.5 82 V83.5 Q843.5 86 841.5 86" stroke-width="1.1"/>
  <path d="M859.5 75 L861.3 79 L865.8 79.3 L862.4 82.2 L863.6 86.5 L859.5 84.1 L855.4 86.5 L856.6 82.2 L853.2 79.3 L857.7 79 Z"/>
 </g>
 <text x="767.5" y="47" font-size="7" font-weight="bold" fill="#5A7AA8">A</text>
 <path d="M772.5 43 H776 M772.5 45.5 H776 M767 48.5 H776" stroke="#9AA8BC" stroke-width="0.8"/>
 <!-- arrange -->
 <path d="M905 41 H913.5 V50.5 H905 Z M896 49 H906 V57.5 H896 Z" fill="#F0C46C"/>
 <rect x="893.5" y="38.5" width="10" height="9.5" fill="#fff" stroke="#707070"/>
 <rect x="906.5" y="51.5" width="10" height="10" fill="#fff" stroke="#707070"/>
 <path d="M903.5 86.5 H908.5 L906 89 Z" fill="#444"/>
 <!-- quick styles -->
 <rect x="934" y="39" width="23" height="23" rx="5" fill="#F7F7F7" stroke="#D2D2D2" stroke-width="1.2"/>
 <path d="M957 49 L944 62.5 H951 L957.5 56 Z" fill="#BDBDBD"/>
 <path d="M958 90 H961 L959.5 91.5 Z" fill="#C8C8C8"/>
 <!-- shape fill/outline/effects -->
 <path d="M971 43 L975 38.5 L980 43.5 L975.5 48 Z" fill="#fff" stroke="#BBBBBB"/>
 <path d="M972 37 V41" stroke="#BBBBBB"/>
 <rect x="968" y="48" width="14" height="2" fill="#D8D8D8"/>
 <path d="M967.5 58 H974 M967.5 58 V66.5 H978 V63" fill="none" stroke="#B8B8B8"/>
 <path d="M974 63 L980.5 56.5 L982 58 L975.5 64.5 Z" fill="#C0C0C0"/>
 <path d="M968 86 L971 79.5 H980 L979 86 Z" fill="#E9E9E9" stroke="#BBBBBB"/>
 <path d="M1031 44 H1035 L1033 46 Z M1052.5 64 H1056.5 L1054.5 66 Z M1049 84 H1053 L1051 86 Z" fill="#C4C4C4"/>
 <path d="M1055.5 108 V102.5 H1061" fill="none" stroke="#C0C0C0"/><path d="M1057.5 104.5 L1061 108 M1058 108 H1061 V105" fill="none" stroke="#A5A5A5"/>
 <!-- editing -->
 <circle cx="1079.5" cy="42" r="3.6" fill="#E8F2FB" stroke="#3F6DB3" stroke-width="1.6"/>
 <path d="M1076.8 44.8 L1072.5 49" stroke="#3F6DB3" stroke-width="2" stroke-linecap="round"/>
 <text x="1070.5" y="63" font-size="8.5" fill="#7D6B8C">ab</text>
 <text x="1073" y="69" font-size="8.5" fill="#4C78AE">ac</text>
 <path d="M1070.5 64.5 L1072 66.5 L1073.5 64.5" stroke="#4C78AE" fill="none" stroke-width="1"/>
 <path d="M1074.5 77.5 V88 L1077 85.5 L1079 89.5 L1080.5 88.8 L1078.7 85 H1082 Z" fill="#fff" stroke="#6A6A6A" stroke-width="1"/>
 <path d="M1133.5 63 H1137.5 L1135.5 65.5 Z M1118 83 H1121.5 L1119.75 85 Z" fill="#555"/>
</svg>
<div class="t" style="left:887.00px;top:68.00px;font-size:11px;color:#333;letter-spacing:-0.443px;">Arrange</div>
<div class="t" style="left:931.50px;top:68.00px;font-size:11px;color:#C2C2C2;letter-spacing:-0.290px;">Quick</div>
<div class="t" style="left:929.00px;top:81.00px;font-size:11px;color:#C2C2C2;letter-spacing:-0.795px;">Styles</div>
<div class="t" style="left:984.00px;top:39.00px;font-size:11px;color:#B9B9B9;letter-spacing:-0.655px;">Shape Fill</div>
<div class="t" style="left:984.00px;top:59.00px;font-size:11px;color:#B9B9B9;letter-spacing:-0.395px;">Shape Outline</div>
<div class="t" style="left:984.00px;top:79.00px;font-size:11px;color:#B9B9B9;letter-spacing:-0.526px;">Shape Effects</div>
<div class="t" style="left:1088.00px;top:39.00px;font-size:11px;color:#383838;letter-spacing:-0.732px;">Find</div>
<div class="t" style="left:1088.00px;top:59.00px;font-size:11px;color:#383838;letter-spacing:-0.828px;">Replace</div>
<div class="t" style="left:1088.00px;top:78.00px;font-size:11px;color:#383838;letter-spacing:-0.856px;">Select</div>
<div class="a" style="left:342px;top:555px;width:830px;height:66px;background:#F0F0F0"></div>
<div class="a" style="left:342px;top:211px;width:830px;height:27px;background:linear-gradient(#F7F8FA,#F3F5F7)"></div>
<div class="a" style="left:342px;top:238px;width:830px;height:1px;background:#E8ECEF"></div>
<svg style="left:0;top:0" width="1200" height="630" viewBox="0 0 1200 630" font-family="Liberation Sans">
 <rect x="357.5" y="162.5" width="5" height="9.5" fill="#fff" stroke="#8A4E40" stroke-width="1"/>
 <path d="M358.5 165 H361.5 M358.5 167.5 H361.5 M358.5 170 H361" stroke="#C9563A" stroke-width="0.8"/>
 <rect x="349" y="160.2" width="9" height="13" fill="#C4401E"/>
 <path d="M351.5 171 V163.5 H354 A2.2 2.2 0 0 1 354 168 H351.5" fill="none" stroke="#F8CDB8" stroke-width="1.6"/>
 <path d="M1154.5 162.5 L1163.5 171.5 M1163.5 162.5 L1154.5 171.5" stroke="#3a3a3a" stroke-width="1.1"/>
 <!-- nav arrows -->
 <path d="M353 196 H364 M357.5 191.5 L353 196 L357.5 200.5" stroke="#707070" stroke-width="1.3" fill="none"/>
 <path d="M380 196 H391 M386.5 191.5 L391 196 L386.5 200.5" stroke="#C9C9C9" stroke-width="1.3" fill="none"/>
 <path d="M402.5 195 L405 197.5 L407.5 195" stroke="#8A8A8A" stroke-width="1.1" fill="none"/>
 <path d="M423.5 201 V190.5 M419 195 L423.5 190.5 L428 195" stroke="#707070" stroke-width="1.3" fill="none"/>
 <rect x="435.5" y="186.5" width="537" height="19" fill="#fff" stroke="#D9D9D9"/>
 <rect x="955.5" y="187" width="1" height="18" fill="#E5E5E5"/>
 <path d="M440 189 H446.5 L448 190.5 V201.5 H440 Z" fill="#FFE28A" stroke="#E8C766" stroke-width="0.8"/>
 <path d="M944 194.5 L947.5 198 L951 194.5" stroke="#555" stroke-width="1.3" fill="none"/>
 <path d="M965 191.5 A4.3 4.3 0 1 1 961 194.5" stroke="#6A6A6A" stroke-width="1.2" fill="none"/>
 <path d="M963 189.5 L965.6 191.6 L963.2 193.8" stroke="#6A6A6A" stroke-width="1.2" fill="none"/>
 <rect x="984.5" y="186.5" width="176" height="19" fill="#fff" stroke="#D9D9D9"/>
 <circle cx="1149.5" cy="195" r="3.2" fill="none" stroke="#555" stroke-width="1.2"/>
 <path d="M1147.2 197.3 L1144.5 200" stroke="#555" stroke-width="1.5"/>
</svg>
<div class="t" style="left:368.00px;top:163.00px;font-size:11px;color:#1A1A1A;letter-spacing:-0.368px;">Insert Picture</div>
<div class="t" style="left:471.00px;top:191.00px;font-size:11px;color:#1A1A1A;letter-spacing:-0.851px;">This PC</div>
<div class="t" style="left:526.30px;top:191.00px;font-size:11px;color:#1A1A1A;letter-spacing:-0.424px;">Downloads</div>
<div class="t" style="left:598.00px;top:191.00px;font-size:11px;color:#1A1A1A;letter-spacing:-0.455px;">ẢNH</div>
<div class="t" style="left:641.50px;top:191.00px;font-size:11px;color:#1A1A1A;letter-spacing:-0.269px;">bài viết tháng 9</div>
<div class="t" style="left:732.70px;top:191.00px;font-size:11px;color:#1A1A1A;letter-spacing:-0.306px;">ảnh nền pp</div>
<div class="t" style="left:806.00px;top:191.00px;font-size:11px;color:#1A1A1A;letter-spacing:-0.543px;">cao cấp</div>
<svg style="left:0;top:0" width="1200" height="630"><path d="M458.5 193.5 L461.0 196 L458.5 198.5" stroke="#8A8A8A" stroke-width="1.2" fill="none"/><path d="M514.5 193.5 L517.0 196 L514.5 198.5" stroke="#8A8A8A" stroke-width="1.2" fill="none"/><path d="M586.5 193.5 L589.0 196 L586.5 198.5" stroke="#8A8A8A" stroke-width="1.2" fill="none"/><path d="M630 193.5 L632.5 196 L630 198.5" stroke="#8A8A8A" stroke-width="1.2" fill="none"/><path d="M721 193.5 L723.5 196 L721 198.5" stroke="#8A8A8A" stroke-width="1.2" fill="none"/><path d="M794 193.5 L796.5 196 L794 198.5" stroke="#8A8A8A" stroke-width="1.2" fill="none"/></svg>
<div class="t" style="left:992.00px;top:191.00px;font-size:11px;color:#707070;letter-spacing:-0.588px;">Search cao cấp</div>
<div class="t" style="left:358.00px;top:219.00px;font-size:11px;color:#1E3A5F;letter-spacing:-0.666px;">Organize</div>
<svg style="left:0;top:0" width="1200" height="630">
 <path d="M402 222.5 H409 L405.5 226.5 Z" fill="#1E3A5F"/>
 <rect x="1065.5" y="219.5" width="12" height="10" fill="#DCE6EE" stroke="#9BB0C2"/>
 <path d="M1066.5 226 Q1070 223 1077 226.5 V229 H1066.5 Z" fill="#3B6E4F"/>
 <path d="M1087 222.5 H1094 L1090.5 226.8 Z" fill="#222"/>
 <rect x="1113.5" y="219.5" width="13" height="10" fill="#fff" stroke="#505050"/>
 <rect x="1120" y="220" width="6" height="9" fill="#4A8FD8"/>
 <circle cx="1151.5" cy="225" r="7.2" fill="#1C63B7"/>
 <text x="1148" y="229.3" font-size="11" font-weight="bold" fill="#fff" font-family="Liberation Sans">?</text>
</svg>
<div class="t" style="left:438.00px;top:219.00px;font-size:11px;color:#1E3A5F;letter-spacing:-0.176px;">New folder</div>
<div class="a" style="left:342px;top:393px;width:219px;height:21px;background:#D9D9D9"></div>
<div class="a" style="left:563px;top:239px;width:1px;height:316px;background:#F7F7F7"></div>
<div class="t" style="left:382.00px;top:258.00px;font-size:11px;color:#1A1A1A;letter-spacing:-0.581px;">Quick access</div>
<div class="t" style="left:382.00px;top:286.00px;font-size:11px;color:#1A1A1A;letter-spacing:-0.208px;">Microsoft PowerPoint</div>
<div class="t" style="left:382.00px;top:313.00px;font-size:11px;color:#1A1A1A;letter-spacing:-0.851px;">This PC</div>
<div class="t" style="left:388.70px;top:335.00px;font-size:11px;color:#1A1A1A;letter-spacing:-0.511px;">3D Objects</div>
<div class="t" style="left:388.70px;top:356.00px;font-size:11px;color:#1A1A1A;letter-spacing:-0.512px;">Desktop</div>
<div class="t" style="left:388.70px;top:377.00px;font-size:11px;color:#1A1A1A;letter-spacing:-0.295px;">Documents</div>
<div class="t" style="left:388.80px;top:399.00px;font-size:11px;color:#1A1A1A;letter-spacing:-0.374px;">Downloads</div>
<div class="t" style="left:388.70px;top:419.00px;font-size:11px;color:#1A1A1A;letter-spacing:-0.678px;">Music</div>
<div class="t" style="left:388.70px;top:441.00px;font-size:11px;color:#1A1A1A;letter-spacing:-0.459px;">Pictures</div>
<div class="t" style="left:388.70px;top:462.00px;font-size:11px;color:#1A1A1A;letter-spacing:-0.488px;">Videos</div>
<div class="t" style="left:388.70px;top:483.00px;font-size:11px;color:#1A1A1A;letter-spacing:-0.735px;">Windows 10 (C:)</div>
<div class="t" style="left:388.70px;top:504.00px;font-size:11px;color:#1A1A1A;letter-spacing:-0.579px;">Local Disk (D:)</div>
<div class="t" style="left:382.00px;top:532.00px;font-size:11px;color:#1A1A1A;letter-spacing:-0.404px;">Network</div>
<svg style="left:0;top:0" width="1200" height="630" font-family="Liberation Sans">
 <path d="M371 257.5 L372.6 261.2 L376.6 261.5 L373.6 264.1 L374.5 268 L371 266 L367.5 268 L368.4 264.1 L365.4 261.5 L369.4 261.2 Z" fill="#3C8FDD"/>
<g transform="translate(14 124.7)"> <rect x="357.5" y="162.5" width="5" height="9.5" fill="#fff" stroke="#8A4E40" stroke-width="1"/>
 <path d="M358.5 165 H361.5 M358.5 167.5 H361.5 M358.5 170 H361" stroke="#C9563A" stroke-width="0.8"/>
 <rect x="349" y="160.2" width="9" height="13" fill="#C4401E"/>
 <path d="M351.5 171 V163.5 H354 A2.2 2.2 0 0 1 354 168 H351.5" fill="none" stroke="#F8CDB8" stroke-width="1.6"/></g>
 <rect x="363" y="313.5" width="14" height="9.5" fill="#5AAEEA" stroke="#3B8FD0" stroke-width="0.8"/>
 <rect x="365" y="324.5" width="10" height="1.5" fill="#7A8A96"/>
 <path d="M376.5 333.5 L383 336.5 V345 L376.5 348 L370 345 V336.5 Z" fill="#5FC3E8"/>
 <path d="M370 336.5 L376.5 339.5 L383 336.5 M376.5 339.5 V348" stroke="#2C9BC9" stroke-width="0.8" fill="#3BA9D6" fill-opacity="0.5"/>
 <rect x="370" y="356" width="13" height="10" fill="#1E8BE0"/>
 <rect x="372.5" y="367" width="8" height="1" fill="#6F8CA5"/>
 <path d="M372 375.5 H378.5 L381.5 378.5 V389 H372 Z" fill="#F5F8FC" stroke="#7A8FA6" stroke-width="0.9"/>
 <path d="M373.5 381 H380 M373.5 383.5 H380 M373.5 386 H380" stroke="#8FA8C5" stroke-width="0.8"/>
 <path d="M374.5 396 H378.5 V404 H382.5 L376.5 410.5 L370.5 404 H374.5 Z" fill="#2A86DA"/>
 <path d="M376 418 V428.5" stroke="#2A86DA" stroke-width="1.6"/>
 <ellipse cx="374.2" cy="429.5" rx="2.6" ry="2.1" fill="#2A86DA"/>
 <path d="M376.5 418 Q381 420 380.5 424" stroke="#2A86DA" stroke-width="1.4" fill="none"/>
 <rect x="370.5" y="441.5" width="12" height="10" fill="#EAF2F8" stroke="#8A9AA8" stroke-width="0.9"/>
 <path d="M371.5 448 Q375 445 382 448.5 V451 H371.5 Z" fill="#3E77B5"/>
 <rect x="371" y="461" width="11" height="13" fill="#3A4A5A"/>
 <rect x="373" y="463" width="7" height="9" fill="#6F8FB0"/>
 <path d="M372 463 V472 M381 463 V472" stroke="#A0B0C0" stroke-dasharray="1 1"/>
 <rect x="370" y="483" width="2" height="2" fill="#2AA0E8"/><rect x="373" y="483" width="2" height="2" fill="#2AA0E8"/>
 <rect x="370" y="486" width="2" height="2" fill="#2AA0E8"/><rect x="373" y="486" width="2" height="2" fill="#2AA0E8"/>
 <rect x="370" y="490" width="13" height="4.5" fill="#4A4A4A"/>
 <rect x="370" y="509.5" width="13" height="5" fill="#4A4A4A"/>
 <rect x="371" y="508" width="11" height="2" fill="#BDBDBD"/>
 <rect x="366" y="533" width="11" height="8" fill="#5AAEEA" stroke="#3B8FD0" stroke-width="0.8"/>
 <path d="M363 538 L369 532 M363 541 H372" stroke="#2C7BC0" stroke-width="1.2"/>
 <rect x="365" y="542" width="9" height="1.5" fill="#6F8CA5"/>
</svg>
<div class="a" style="left:342px;top:239px;width:816px;height:316px;overflow:hidden">
<div class="a" style="left:331.0px;top:114.3px;width:93px;height:107.5px;background:#E5F3FF"></div>
<div class="a" style="left:428.3px;top:114.3px;width:92.5px;height:107.5px;background:#CCE8FF;border:1px solid #99D1FF"></div>
<div class="a" style="left:240.0px;top:8.8px;width:79.5px;height:59.5px;background:radial-gradient(ellipse at 30% 40%,#DDA08B 0,transparent 60%),radial-gradient(ellipse at 80% 80%,#C47C68 0,transparent 50%),radial-gradient(ellipse at 70% 20%,#D99A84 0,transparent 50%),#CF8B74;box-shadow:1px 1px 1px rgba(0,0,0,0.18)"></div>
<div class="a" style="left:336.8px;top:8.8px;width:79.5px;height:59.5px;background:radial-gradient(ellipse at 30% 30%,#B5AEA6 0,transparent 55%),radial-gradient(ellipse at 75% 75%,#938B82 0,transparent 55%),#A69F97;box-shadow:1px 1px 1px rgba(0,0,0,0.18)"></div>
<div class="a" style="left:433.6px;top:8.8px;width:79.5px;height:59.5px;background:radial-gradient(ellipse at 40% 50%,#F1D2AB 0,transparent 60%),radial-gradient(ellipse at 85% 85%,#DDB283 0,transparent 45%),#E8C49A;box-shadow:1px 1px 1px rgba(0,0,0,0.18)"></div>
<div class="a" style="left:530.4px;top:8.8px;width:79.5px;height:59.5px;background:radial-gradient(ellipse 30% 35% at 10% 10%,#9CC6A6 0,transparent 100%),radial-gradient(ellipse 25% 30% at 92% 88%,#8FBFA5 0,transparent 100%),#FBE4D6;box-shadow:1px 1px 1px rgba(0,0,0,0.18)"></div>
<div class="a" style="left:627.2px;top:8.8px;width:79.5px;height:59.5px;background:radial-gradient(ellipse 28% 42% at 28% 38%,#C6D0C4 0,#C9D2C6 55%,transparent 100%),radial-gradient(ellipse 30% 42% at 68% 65%,#BCC8BB 0,#C2CDC0 55%,transparent 100%),#FBFCFB;box-shadow:1px 1px 1px rgba(0,0,0,0.18)"></div>
<div class="a" style="left:724.0px;top:8.8px;width:79.5px;height:59.5px;background:radial-gradient(ellipse 28% 45% at 18% 35%,#F7CAD7 0,#F8D2DD 45%,transparent 100%),radial-gradient(ellipse 22% 40% at 88% 62%,#F4BACB 0,#F6C6D3 45%,transparent 100%),#FEFAFB;box-shadow:1px 1px 1px rgba(0,0,0,0.18)"></div>
<div class="a" style="left:240.0px;top:117.7px;width:79.5px;height:59.5px;background:radial-gradient(ellipse 30% 22% at 15% 6%,#B3D3EE 0,#C0DAF0 40%,transparent 100%),radial-gradient(ellipse 20% 25% at 90% 90%,#A3C8EC 0,#B3D1EE 40%,transparent 100%),#F8F5F0;box-shadow:1px 1px 1px rgba(0,0,0,0.18)"></div>
<div class="a" style="left:336.8px;top:117.7px;width:79.5px;height:59.5px;background:radial-gradient(ellipse 20% 25% at 12% 15%,#4F6E8E 0,transparent 100%),radial-gradient(ellipse 22% 30% at 88% 80%,#5C7C93 0,transparent 100%),#1C3F6D;box-shadow:1px 1px 1px rgba(0,0,0,0.18)"></div>
<div class="a" style="left:433.6px;top:117.7px;width:79.5px;height:59.5px;background:radial-gradient(ellipse 55% 45% at 50% 45%,#FFFFFF 0,#FFFFFF 60%,transparent 100%),linear-gradient(#F1F4FA,#E8EEF4),radial-gradient(ellipse 40% 25% at 20% 95%,#B8C9A0 0,transparent 100%),#EEF2F7;box-shadow:1px 1px 1px rgba(0,0,0,0.18)"></div>
<div class="a" style="left:530.4px;top:117.7px;width:79.5px;height:59.5px;background:radial-gradient(ellipse 18% 30% at 5% 12%,#C9B6D6 0,transparent 100%),radial-gradient(ellipse 18% 30% at 95% 88%,#B9A5CC 0,transparent 100%),#FCFBFD;box-shadow:1px 1px 1px rgba(0,0,0,0.18)"></div>
<div class="a" style="left:627.2px;top:117.7px;width:79.5px;height:59.5px;background:radial-gradient(ellipse 22% 60% at 8% 55%,#B7D3BC 0,transparent 100%),radial-gradient(ellipse 12% 20% at 92% 10%,#BCD6C3 0,transparent 100%),#FDFEFD;box-shadow:1px 1px 1px rgba(0,0,0,0.18)"></div>
<div class="a" style="left:724.0px;top:117.7px;width:79.5px;height:59.5px;background:radial-gradient(ellipse 15% 25% at 8% 85%,#C9D6C2 0,transparent 100%),radial-gradient(ellipse 15% 25% at 92% 12%,#D3DECD 0,transparent 100%),#FCFCFA;box-shadow:1px 1px 1px rgba(0,0,0,0.18)"></div>
<div class="a" style="left:240.0px;top:226.6px;width:79.5px;height:59.5px;background:linear-gradient(#F0B5A8,#F3E5DA 50%,#B7DCD6);box-shadow:1px 1px 1px rgba(0,0,0,0.18)"></div>
<div class="a" style="left:336.8px;top:226.6px;width:79.5px;height:59.5px;background:linear-gradient(rgba(235,215,220,0.5),transparent 20%,transparent 78%,rgba(225,215,225,0.5)),#FEFDFD;box-shadow:1px 1px 1px rgba(0,0,0,0.18)"></div>
<div class="a" style="left:433.6px;top:226.6px;width:79.5px;height:59.5px;background:linear-gradient(#FAF8F4 0,#F5F1EA 75%,#EADFCF 82%,#E3D2C0 95%,#F2EAE0 100%);box-shadow:1px 1px 1px rgba(0,0,0,0.18)"></div>
<div class="a" style="left:530.4px;top:226.6px;width:79.5px;height:59.5px;background:radial-gradient(ellipse 15% 15% at 15% 20%,#D9D9D9 0,transparent 100%),radial-gradient(ellipse 15% 15% at 88% 85%,#D6D6D6 0,transparent 100%),#FFFFFF;box-shadow:1px 1px 1px rgba(0,0,0,0.18)"></div>
<div class="a" style="left:627.2px;top:226.6px;width:79.5px;height:59.5px;background:radial-gradient(ellipse 40% 35% at 55% 50%,#8DB6C1 0,transparent 100%),#6FA2AF;box-shadow:1px 1px 1px rgba(0,0,0,0.18)"></div>
<div class="a" style="left:724.0px;top:226.6px;width:79.5px;height:59.5px;background:radial-gradient(ellipse 25% 30% at 15% 15%,#F1A4B0 0,transparent 100%),radial-gradient(ellipse 20% 30% at 88% 82%,#EB97A5 0,transparent 100%),#FAE0E6;box-shadow:1px 1px 1px rgba(0,0,0,0.18)"></div>
<div class="t" style="left:241.65px;top:73px;font-size:11px;color:#1A1A1A;letter-spacing:-0.127px">nen-powerpoint-</div>
<div class="t" style="left:241.50px;top:86px;font-size:11px;color:#1A1A1A;letter-spacing:0.063px">don-gian-tinh-te</div>
<div class="t" style="left:273.30px;top:99px;font-size:11px;color:#1A1A1A;letter-spacing:-0.747px">-55</div>
<div class="t" style="left:338.45px;top:73px;font-size:11px;color:#1A1A1A;letter-spacing:-0.127px">nen-powerpoint-</div>
<div class="t" style="left:338.30px;top:86px;font-size:11px;color:#1A1A1A;letter-spacing:0.063px">don-gian-tinh-te</div>
<div class="t" style="left:370.10px;top:99px;font-size:11px;color:#1A1A1A;letter-spacing:-0.747px">-56</div>
<div class="t" style="left:435.25px;top:73px;font-size:11px;color:#1A1A1A;letter-spacing:-0.127px">nen-powerpoint-</div>
<div class="t" style="left:435.10px;top:86px;font-size:11px;color:#1A1A1A;letter-spacing:0.063px">don-gian-tinh-te</div>
<div class="t" style="left:466.90px;top:99px;font-size:11px;color:#1A1A1A;letter-spacing:-0.747px">-58</div>
<div class="t" style="left:532.05px;top:73px;font-size:11px;color:#1A1A1A;letter-spacing:-0.127px">nen-powerpoint-</div>
<div class="t" style="left:531.90px;top:86px;font-size:11px;color:#1A1A1A;letter-spacing:0.063px">don-gian-tinh-te</div>
<div class="t" style="left:563.70px;top:99px;font-size:11px;color:#1A1A1A;letter-spacing:-0.747px">-59</div>
<div class="t" style="left:628.85px;top:73px;font-size:11px;color:#1A1A1A;letter-spacing:-0.127px">nen-powerpoint-</div>
<div class="t" style="left:628.70px;top:86px;font-size:11px;color:#1A1A1A;letter-spacing:0.063px">don-gian-tinh-te</div>
<div class="t" style="left:660.50px;top:99px;font-size:11px;color:#1A1A1A;letter-spacing:-0.747px">-60</div>
<div class="t" style="left:725.65px;top:73px;font-size:11px;color:#1A1A1A;letter-spacing:-0.127px">nen-powerpoint-</div>
<div class="t" style="left:725.50px;top:86px;font-size:11px;color:#1A1A1A;letter-spacing:0.063px">don-gian-tinh-te</div>
<div class="t" style="left:757.30px;top:99px;font-size:11px;color:#1A1A1A;letter-spacing:-0.747px">-61</div>
<div class="t" style="left:241.65px;top:182px;font-size:11px;color:#1A1A1A;letter-spacing:-0.127px">nen-powerpoint-</div>
<div class="t" style="left:241.50px;top:195px;font-size:11px;color:#1A1A1A;letter-spacing:0.063px">don-gian-tinh-te</div>
<div class="t" style="left:273.30px;top:208px;font-size:11px;color:#1A1A1A;letter-spacing:-0.747px">-62</div>
<div class="t" style="left:338.45px;top:182px;font-size:11px;color:#1A1A1A;letter-spacing:-0.127px">nen-powerpoint-</div>
<div class="t" style="left:338.30px;top:195px;font-size:11px;color:#1A1A1A;letter-spacing:0.063px">don-gian-tinh-te</div>
<div class="t" style="left:370.10px;top:208px;font-size:11px;color:#1A1A1A;letter-spacing:-0.747px">-63</div>
<div class="t" style="left:435.25px;top:182px;font-size:11px;color:#1A1A1A;letter-spacing:-0.127px">nen-powerpoint-</div>
<div class="t" style="left:435.10px;top:195px;font-size:11px;color:#1A1A1A;letter-spacing:0.063px">don-gian-tinh-te</div>
<div class="t" style="left:466.90px;top:208px;font-size:11px;color:#1A1A1A;letter-spacing:-0.747px">-64</div>
<div class="t" style="left:532.05px;top:182px;font-size:11px;color:#1A1A1A;letter-spacing:-0.127px">nen-powerpoint-</div>
<div class="t" style="left:531.90px;top:195px;font-size:11px;color:#1A1A1A;letter-spacing:0.063px">don-gian-tinh-te</div>
<div class="t" style="left:563.70px;top:208px;font-size:11px;color:#1A1A1A;letter-spacing:-0.747px">-65</div>
<div class="t" style="left:628.85px;top:182px;font-size:11px;color:#1A1A1A;letter-spacing:-0.127px">nen-powerpoint-</div>
<div class="t" style="left:628.70px;top:195px;font-size:11px;color:#1A1A1A;letter-spacing:0.063px">don-gian-tinh-te</div>
<div class="t" style="left:660.50px;top:208px;font-size:11px;color:#1A1A1A;letter-spacing:-0.747px">-67</div>
<div class="t" style="left:725.65px;top:182px;font-size:11px;color:#1A1A1A;letter-spacing:-0.127px">nen-powerpoint-</div>
<div class="t" style="left:725.50px;top:195px;font-size:11px;color:#1A1A1A;letter-spacing:0.063px">don-gian-tinh-te</div>
<div class="t" style="left:757.30px;top:208px;font-size:11px;color:#1A1A1A;letter-spacing:-0.747px">-68</div>
<div class="t" style="left:241.65px;top:291px;font-size:11px;color:#1A1A1A;letter-spacing:-0.127px">nen-powerpoint-</div>
<div class="t" style="left:241.50px;top:304px;font-size:11px;color:#1A1A1A;letter-spacing:0.063px">don-gian-tinh-te</div>
<div class="t" style="left:338.45px;top:291px;font-size:11px;color:#1A1A1A;letter-spacing:-0.127px">nen-powerpoint-</div>
<div class="t" style="left:338.30px;top:304px;font-size:11px;color:#1A1A1A;letter-spacing:0.063px">don-gian-tinh-te</div>
<div class="t" style="left:435.25px;top:291px;font-size:11px;color:#1A1A1A;letter-spacing:-0.127px">nen-powerpoint-</div>
<div class="t" style="left:435.10px;top:304px;font-size:11px;color:#1A1A1A;letter-spacing:0.063px">don-gian-tinh-te</div>
<div class="t" style="left:532.05px;top:291px;font-size:11px;color:#1A1A1A;letter-spacing:-0.127px">nen-powerpoint-</div>
<div class="t" style="left:531.90px;top:304px;font-size:11px;color:#1A1A1A;letter-spacing:0.063px">don-gian-tinh-te</div>
<div class="t" style="left:628.85px;top:291px;font-size:11px;color:#1A1A1A;letter-spacing:-0.127px">nen-powerpoint-</div>
<div class="t" style="left:628.70px;top:304px;font-size:11px;color:#1A1A1A;letter-spacing:0.063px">don-gian-tinh-te</div>
<div class="t" style="left:725.65px;top:291px;font-size:11px;color:#1A1A1A;letter-spacing:-0.127px">nen-powerpoint-</div>
<div class="t" style="left:725.50px;top:304px;font-size:11px;color:#1A1A1A;letter-spacing:0.063px">don-gian-tinh-te</div>
</div>
<svg style="left:0;top:0" width="1200" height="630"><defs><filter id="bl" x="-20%" y="-20%" width="140%" height="140%"><feGaussianBlur stdDeviation="0.6"/></filter><clipPath id="cg"><rect x="342" y="239" width="816" height="316"/></clipPath></defs><g filter="url(#bl)" clip-path="url(#cg)"><circle cx="786.3" cy="399.4" r="2.1" fill="#6E9BD0" opacity="0.8"/><circle cx="801.2" cy="398.4" r="2.0" fill="#E38C8C" opacity="0.8"/><circle cx="783.0" cy="398.2" r="1.8" fill="#F2C7A8" opacity="0.8"/><circle cx="779.3" cy="404.3" r="2.4" fill="#6E9BD0" opacity="0.8"/><circle cx="805.0" cy="408.1" r="2.0" fill="#6E9BD0" opacity="0.8"/><circle cx="793.9" cy="403.8" r="2.6" fill="#6E9BD0" opacity="0.8"/><circle cx="793.3" cy="399.1" r="1.8" fill="#E38C8C" opacity="0.8"/><circle cx="780.1" cy="402.3" r="2.3" fill="#F2C7A8" opacity="0.8"/><circle cx="779.7" cy="407.0" r="1.5" fill="#6E9BD0" opacity="0.8"/><circle cx="793.0" cy="397.8" r="1.3" fill="#F2C7A8" opacity="0.8"/><circle cx="791.5" cy="406.3" r="2.3" fill="#5A6E9A" opacity="0.8"/><circle cx="794.2" cy="404.9" r="1.6" fill="#F2C7A8" opacity="0.8"/><circle cx="797.6" cy="401.1" r="2.0" fill="#E38C8C" opacity="0.8"/><circle cx="791.5" cy="402.9" r="1.8" fill="#E38C8C" opacity="0.8"/><circle cx="806.0" cy="398.8" r="1.8" fill="#9CC089" opacity="0.8"/><circle cx="781.2" cy="405.5" r="1.3" fill="#B5D3A0" opacity="0.8"/><circle cx="778.9" cy="406.7" r="2.3" fill="#9CC089" opacity="0.8"/><circle cx="786.8" cy="403.0" r="1.9" fill="#5A6E9A" opacity="0.8"/><circle cx="778.7" cy="398.4" r="1.6" fill="#B5D3A0" opacity="0.8"/><circle cx="796.5" cy="397.8" r="2.2" fill="#B5D3A0" opacity="0.8"/><circle cx="793.9" cy="409.0" r="1.8" fill="#B5D3A0" opacity="0.8"/><circle cx="788.2" cy="408.7" r="1.2" fill="#5A6E9A" opacity="0.8"/><circle cx="787.3" cy="407.7" r="1.9" fill="#F2C7A8" opacity="0.8"/><circle cx="799.6" cy="399.0" r="1.5" fill="#5A6E9A" opacity="0.8"/><circle cx="804.1" cy="405.6" r="1.4" fill="#5A6E9A" opacity="0.8"/><circle cx="793.1" cy="412.6" r="2.3" fill="#E38C8C" opacity="0.8"/><circle cx="785.0" cy="404.2" r="1.7" fill="#5A6E9A" opacity="0.8"/><circle cx="805.3" cy="399.4" r="1.4" fill="#F2C7A8" opacity="0.8"/><circle cx="844.0" cy="357.8" r="1.8" fill="#C9D9B8" opacity="0.8"/><circle cx="833.0" cy="357.7" r="1.3" fill="#8FAF8A" opacity="0.8"/><circle cx="842.7" cy="360.9" r="1.0" fill="#A7C59A" opacity="0.8"/><circle cx="838.4" cy="366.4" r="1.9" fill="#D8C2A8" opacity="0.8"/><circle cx="836.7" cy="361.6" r="1.4" fill="#D8C2A8" opacity="0.8"/><circle cx="827.3" cy="358.4" r="1.1" fill="#C9D9B8" opacity="0.8"/><circle cx="828.7" cy="363.7" r="0.9" fill="#C9D9B8" opacity="0.8"/><circle cx="840.6" cy="367.2" r="1.5" fill="#A7C59A" opacity="0.8"/><circle cx="850.1" cy="363.8" r="1.0" fill="#8FAF8A" opacity="0.8"/><circle cx="852.4" cy="363.7" r="1.4" fill="#A7C59A" opacity="0.8"/><circle cx="849.4" cy="367.6" r="1.4" fill="#D8C2A8" opacity="0.8"/><circle cx="834.3" cy="359.1" r="1.7" fill="#8FAF8A" opacity="0.8"/><circle cx="839.0" cy="364.6" r="1.4" fill="#C9D9B8" opacity="0.8"/><circle cx="852.2" cy="363.0" r="1.0" fill="#A7C59A" opacity="0.8"/><circle cx="846.8" cy="360.7" r="1.6" fill="#A7C59A" opacity="0.8"/><circle cx="845.1" cy="360.3" r="1.2" fill="#C9D9B8" opacity="0.8"/><circle cx="778.7" cy="374.5" r="1.8" fill="#C2D3E6" opacity="0.6"/><circle cx="780.4" cy="388.2" r="2.2" fill="#A9BFD8" opacity="0.6"/><circle cx="781.4" cy="395.3" r="2.1" fill="#A9BFD8" opacity="0.6"/><circle cx="777.8" cy="383.9" r="2.1" fill="#A9BFD8" opacity="0.6"/><circle cx="781.3" cy="383.2" r="1.3" fill="#C2D3E6" opacity="0.6"/><circle cx="779.3" cy="399.5" r="2.5" fill="#C2D3E6" opacity="0.6"/><circle cx="777.1" cy="370.3" r="1.7" fill="#C2D3E6" opacity="0.6"/><circle cx="777.8" cy="388.5" r="2.4" fill="#A9BFD8" opacity="0.6"/><circle cx="779.5" cy="389.6" r="2.2" fill="#A9BFD8" opacity="0.6"/><circle cx="781.6" cy="370.9" r="1.6" fill="#A9BFD8" opacity="0.6"/><circle cx="685.5" cy="359.8" r="2.2" fill="#5C7890" opacity="0.7"/><circle cx="680.8" cy="369.1" r="2.1" fill="#5C7890" opacity="0.7"/><circle cx="684.6" cy="369.1" r="2.1" fill="#6F8EA8" opacity="0.7"/><circle cx="691.7" cy="358.0" r="1.9" fill="#5C7890" opacity="0.7"/><circle cx="689.5" cy="359.5" r="2.2" fill="#5C7890" opacity="0.7"/><circle cx="687.7" cy="361.9" r="1.8" fill="#6F8EA8" opacity="0.7"/><circle cx="680.1" cy="367.3" r="2.1" fill="#6F8EA8" opacity="0.7"/><circle cx="686.1" cy="368.9" r="1.7" fill="#6F8EA8" opacity="0.7"/><circle cx="753.7" cy="400.5" r="1.4" fill="#8FA8A0" opacity="0.7"/><circle cx="747.8" cy="410.4" r="1.5" fill="#6A8A90" opacity="0.7"/><circle cx="746.3" cy="399.1" r="2.4" fill="#8FA8A0" opacity="0.7"/><circle cx="755.0" cy="408.6" r="2.2" fill="#6A8A90" opacity="0.7"/><circle cx="746.4" cy="413.2" r="1.8" fill="#6A8A90" opacity="0.7"/><circle cx="741.5" cy="405.9" r="2.3" fill="#7F9A9A" opacity="0.7"/><circle cx="749.8" cy="410.7" r="1.2" fill="#7F9A9A" opacity="0.7"/><circle cx="747.3" cy="409.8" r="1.8" fill="#8FA8A0" opacity="0.7"/><circle cx="751.1" cy="406.3" r="1.7" fill="#7F9A9A" opacity="0.7"/><circle cx="754.7" cy="397.7" r="1.3" fill="#7F9A9A" opacity="0.7"/><circle cx="752.7" cy="405.8" r="1.8" fill="#7F9A9A" opacity="0.7"/><circle cx="746.8" cy="407.7" r="1.8" fill="#6A8A90" opacity="0.7"/><circle cx="695.4" cy="469.9" r="1.5" fill="#F2C0A0" opacity="0.8"/><circle cx="719.4" cy="469.6" r="1.5" fill="#A9CFA6" opacity="0.8"/><circle cx="751.8" cy="477.3" r="1.1" fill="#F2C0A0" opacity="0.8"/><circle cx="690.5" cy="468.1" r="1.4" fill="#E6B5C8" opacity="0.8"/><circle cx="732.2" cy="471.7" r="1.1" fill="#A9CFA6" opacity="0.8"/><circle cx="740.9" cy="477.4" r="1.0" fill="#B9D9E8" opacity="0.8"/><circle cx="730.0" cy="471.0" r="1.2" fill="#C9A2D0" opacity="0.8"/><circle cx="755.3" cy="469.2" r="2.1" fill="#F2C0A0" opacity="0.8"/><circle cx="748.8" cy="468.6" r="1.7" fill="#C9A2D0" opacity="0.8"/><circle cx="692.4" cy="471.8" r="1.5" fill="#A9CFA6" opacity="0.8"/><circle cx="712.7" cy="470.9" r="0.9" fill="#A9CFA6" opacity="0.8"/><circle cx="681.3" cy="473.2" r="1.4" fill="#E6B5C8" opacity="0.8"/><circle cx="709.8" cy="472.8" r="1.2" fill="#E6B5C8" opacity="0.8"/><circle cx="688.6" cy="477.6" r="1.1" fill="#E6B5C8" opacity="0.8"/><circle cx="686.4" cy="469.9" r="2.1" fill="#C9A2D0" opacity="0.8"/><circle cx="700.9" cy="468.2" r="1.4" fill="#B9D9E8" opacity="0.8"/><circle cx="743.7" cy="469.7" r="1.0" fill="#D85A5A" opacity="0.8"/><circle cx="724.3" cy="475.0" r="0.9" fill="#E6B5C8" opacity="0.8"/><circle cx="742.2" cy="468.8" r="2.1" fill="#A9CFA6" opacity="0.8"/><circle cx="753.0" cy="474.2" r="1.9" fill="#E6B5C8" opacity="0.8"/><circle cx="727.2" cy="469.3" r="1.2" fill="#E6B5C8" opacity="0.8"/><circle cx="715.2" cy="470.7" r="1.6" fill="#A9CFA6" opacity="0.8"/><circle cx="728.3" cy="467.1" r="1.8" fill="#E6B5C8" opacity="0.8"/><circle cx="755.4" cy="469.7" r="1.1" fill="#A9CFA6" opacity="0.8"/><circle cx="728.8" cy="473.0" r="1.1" fill="#F2C0A0" opacity="0.8"/><circle cx="718.8" cy="468.7" r="1.3" fill="#E6B5C8" opacity="0.8"/><circle cx="757.4" cy="467.0" r="0.8" fill="#D85A5A" opacity="0.8"/><circle cx="722.8" cy="468.9" r="1.5" fill="#F2C0A0" opacity="0.8"/><circle cx="688.1" cy="476.4" r="1.4" fill="#F2C0A0" opacity="0.8"/><circle cx="722.4" cy="477.3" r="2.2" fill="#A9CFA6" opacity="0.8"/><circle cx="733.4" cy="478.4" r="1.3" fill="#B9D9E8" opacity="0.8"/><circle cx="736.6" cy="468.3" r="2.2" fill="#E6B5C8" opacity="0.8"/><circle cx="745.1" cy="466.8" r="1.7" fill="#A9CFA6" opacity="0.8"/><circle cx="713.4" cy="467.3" r="1.7" fill="#F2C0A0" opacity="0.8"/><circle cx="747.7" cy="474.6" r="1.2" fill="#C9A2D0" opacity="0.8"/><circle cx="733.8" cy="467.1" r="1.1" fill="#A9CFA6" opacity="0.8"/><circle cx="714.6" cy="469.8" r="2.1" fill="#D85A5A" opacity="0.8"/><circle cx="705.0" cy="467.0" r="2.0" fill="#C9A2D0" opacity="0.8"/><circle cx="707.6" cy="466.6" r="1.3" fill="#F2C0A0" opacity="0.8"/><circle cx="701.6" cy="474.5" r="1.1" fill="#E6B5C8" opacity="0.8"/><circle cx="686.9" cy="521.0" r="1.0" fill="#D85A5A" opacity="0.8"/><circle cx="683.1" cy="509.9" r="1.2" fill="#C9A2D0" opacity="0.8"/><circle cx="686.4" cy="523.0" r="2.0" fill="#C9A2D0" opacity="0.8"/><circle cx="731.1" cy="519.6" r="2.0" fill="#F2C0A0" opacity="0.8"/><circle cx="739.4" cy="519.7" r="1.5" fill="#A9CFA6" opacity="0.8"/><circle cx="736.3" cy="518.6" r="0.9" fill="#B9D9E8" opacity="0.8"/><circle cx="749.4" cy="518.4" r="1.8" fill="#D85A5A" opacity="0.8"/><circle cx="690.7" cy="516.9" r="1.5" fill="#E6B5C8" opacity="0.8"/><circle cx="744.3" cy="517.8" r="2.0" fill="#B9D9E8" opacity="0.8"/><circle cx="754.4" cy="518.6" r="0.9" fill="#E6B5C8" opacity="0.8"/><circle cx="690.2" cy="514.6" r="0.9" fill="#F2C0A0" opacity="0.8"/><circle cx="723.4" cy="518.4" r="1.7" fill="#B9D9E8" opacity="0.8"/><circle cx="698.9" cy="513.3" r="1.4" fill="#E6B5C8" opacity="0.8"/><circle cx="738.2" cy="516.6" r="1.5" fill="#B9D9E8" opacity="0.8"/><circle cx="720.8" cy="520.0" r="1.5" fill="#E6B5C8" opacity="0.8"/><circle cx="745.8" cy="512.9" r="1.9" fill="#C9A2D0" opacity="0.8"/><circle cx="737.5" cy="523.3" r="1.5" fill="#F2C0A0" opacity="0.8"/><circle cx="685.8" cy="522.3" r="1.2" fill="#E6B5C8" opacity="0.8"/><circle cx="727.9" cy="518.6" r="0.9" fill="#C9A2D0" opacity="0.8"/><circle cx="705.7" cy="518.7" r="1.8" fill="#D85A5A" opacity="0.8"/><circle cx="724.1" cy="509.8" r="0.9" fill="#A9CFA6" opacity="0.8"/><circle cx="755.7" cy="511.0" r="1.1" fill="#F2C0A0" opacity="0.8"/><circle cx="702.5" cy="516.8" r="1.5" fill="#F2C0A0" opacity="0.8"/><circle cx="739.6" cy="523.5" r="1.6" fill="#A9CFA6" opacity="0.8"/><circle cx="756.1" cy="522.7" r="0.8" fill="#F2C0A0" opacity="0.8"/><circle cx="685.8" cy="516.7" r="2.2" fill="#A9CFA6" opacity="0.8"/><circle cx="710.0" cy="522.4" r="2.1" fill="#E6B5C8" opacity="0.8"/><circle cx="725.2" cy="511.6" r="1.5" fill="#A9CFA6" opacity="0.8"/><circle cx="690.1" cy="521.1" r="1.5" fill="#E6B5C8" opacity="0.8"/><circle cx="734.7" cy="512.8" r="2.1" fill="#F2C0A0" opacity="0.8"/><circle cx="710.5" cy="511.8" r="2.1" fill="#B9D9E8" opacity="0.8"/><circle cx="715.0" cy="513.8" r="1.0" fill="#A9CFA6" opacity="0.8"/><circle cx="709.1" cy="511.3" r="1.3" fill="#A9CFA6" opacity="0.8"/><circle cx="738.4" cy="521.3" r="1.0" fill="#C9A2D0" opacity="0.8"/><circle cx="735.4" cy="522.2" r="1.2" fill="#A9CFA6" opacity="0.8"/><circle cx="684.9" cy="515.1" r="2.0" fill="#E6B5C8" opacity="0.8"/><circle cx="707.9" cy="515.6" r="1.2" fill="#E6B5C8" opacity="0.8"/><circle cx="701.7" cy="510.3" r="1.7" fill="#B9D9E8" opacity="0.8"/><circle cx="752.8" cy="513.1" r="1.2" fill="#D85A5A" opacity="0.8"/><circle cx="704.4" cy="520.4" r="1.9" fill="#F2C0A0" opacity="0.8"/><circle cx="755.9" cy="500.0" r="1.6" fill="#E6B5C8" opacity="0.8"/><circle cx="754.6" cy="477.1" r="1.7" fill="#A9CFA6" opacity="0.8"/><circle cx="753.7" cy="479.8" r="1.8" fill="#A9CFA6" opacity="0.8"/><circle cx="749.2" cy="503.4" r="1.0" fill="#A9CFA6" opacity="0.8"/><circle cx="752.1" cy="484.1" r="1.1" fill="#A9CFA6" opacity="0.8"/><circle cx="752.0" cy="482.8" r="1.4" fill="#A9CFA6" opacity="0.8"/><circle cx="749.8" cy="494.9" r="0.9" fill="#A9CFA6" opacity="0.8"/><circle cx="753.2" cy="489.2" r="1.2" fill="#A9CFA6" opacity="0.8"/><circle cx="752.2" cy="492.0" r="1.1" fill="#E6B5C8" opacity="0.8"/><circle cx="751.5" cy="478.3" r="1.1" fill="#A9CFA6" opacity="0.8"/><circle cx="684.7" cy="483.7" r="0.8" fill="#A9CFA6" opacity="0.8"/><circle cx="682.1" cy="500.0" r="1.1" fill="#A9CFA6" opacity="0.8"/><circle cx="681.8" cy="479.5" r="1.1" fill="#A9CFA6" opacity="0.8"/><circle cx="680.6" cy="492.7" r="1.6" fill="#E6B5C8" opacity="0.8"/><circle cx="680.4" cy="504.5" r="1.3" fill="#A9CFA6" opacity="0.8"/><circle cx="682.4" cy="487.0" r="1.8" fill="#E6B5C8" opacity="0.8"/><circle cx="680.6" cy="490.4" r="1.7" fill="#A9CFA6" opacity="0.8"/><circle cx="685.6" cy="492.3" r="0.9" fill="#A9CFA6" opacity="0.8"/><circle cx="852.4" cy="515.1" r="0.9" fill="#F0C040" opacity="0.85"/><circle cx="788.5" cy="522.3" r="0.9" fill="#9FC08A" opacity="0.85"/><circle cx="832.9" cy="519.1" r="1.6" fill="#6BA86B" opacity="0.85"/><circle cx="783.2" cy="520.4" r="0.8" fill="#F0C040" opacity="0.85"/><circle cx="794.7" cy="521.8" r="1.4" fill="#8A6FC0" opacity="0.85"/><circle cx="851.7" cy="518.9" r="1.3" fill="#6BA86B" opacity="0.85"/><circle cx="831.1" cy="513.7" r="0.9" fill="#E58A3A" opacity="0.85"/><circle cx="850.2" cy="514.5" r="1.1" fill="#9FC08A" opacity="0.85"/><circle cx="823.5" cy="512.7" r="1.1" fill="#6BA86B" opacity="0.85"/><circle cx="798.3" cy="515.8" r="1.6" fill="#F0C040" opacity="0.85"/><circle cx="813.7" cy="514.9" r="1.0" fill="#6BA86B" opacity="0.85"/><circle cx="831.6" cy="515.7" r="0.8" fill="#6BA86B" opacity="0.85"/><circle cx="845.6" cy="519.1" r="0.9" fill="#F0C040" opacity="0.85"/><circle cx="828.7" cy="521.9" r="1.0" fill="#D9534F" opacity="0.85"/><circle cx="830.9" cy="519.8" r="1.2" fill="#6BA86B" opacity="0.85"/><circle cx="792.1" cy="520.6" r="1.5" fill="#E58A3A" opacity="0.85"/><circle cx="781.9" cy="517.6" r="1.0" fill="#9FC08A" opacity="0.85"/><circle cx="840.6" cy="514.9" r="1.0" fill="#9FC08A" opacity="0.85"/><circle cx="846.0" cy="513.7" r="1.4" fill="#E58A3A" opacity="0.85"/><circle cx="791.2" cy="514.8" r="1.2" fill="#C96C9C" opacity="0.85"/><circle cx="781.0" cy="518.5" r="1.7" fill="#D9534F" opacity="0.85"/><circle cx="793.2" cy="522.3" r="0.9" fill="#D9534F" opacity="0.85"/><circle cx="832.0" cy="514.4" r="1.2" fill="#C96C9C" opacity="0.85"/><circle cx="845.5" cy="519.9" r="1.8" fill="#F0C040" opacity="0.85"/><circle cx="802.3" cy="514.5" r="1.7" fill="#C96C9C" opacity="0.85"/><circle cx="813.1" cy="515.7" r="1.5" fill="#9FC08A" opacity="0.85"/><circle cx="805.8" cy="515.9" r="1.0" fill="#D9534F" opacity="0.85"/><circle cx="782.7" cy="513.4" r="1.2" fill="#D9534F" opacity="0.85"/><circle cx="820.4" cy="520.2" r="1.2" fill="#9FC08A" opacity="0.85"/><circle cx="840.7" cy="520.8" r="1.2" fill="#D9534F" opacity="0.85"/><circle cx="831.6" cy="514.6" r="1.3" fill="#6BA86B" opacity="0.85"/><circle cx="791.7" cy="516.2" r="1.7" fill="#D9534F" opacity="0.85"/><circle cx="825.9" cy="515.1" r="1.4" fill="#6BA86B" opacity="0.85"/><circle cx="779.8" cy="512.9" r="0.9" fill="#D9534F" opacity="0.85"/><circle cx="796.6" cy="520.1" r="1.7" fill="#8A6FC0" opacity="0.85"/><circle cx="804.9" cy="515.9" r="1.8" fill="#D9534F" opacity="0.85"/><circle cx="797.0" cy="519.8" r="1.1" fill="#8A6FC0" opacity="0.85"/><circle cx="799.8" cy="519.8" r="1.4" fill="#9FC08A" opacity="0.85"/><circle cx="826.1" cy="522.0" r="0.8" fill="#F0C040" opacity="0.85"/><circle cx="785.0" cy="519.8" r="1.3" fill="#9FC08A" opacity="0.85"/><circle cx="806.7" cy="515.1" r="1.2" fill="#6BA86B" opacity="0.85"/><circle cx="787.0" cy="517.6" r="0.8" fill="#C96C9C" opacity="0.85"/><circle cx="800.3" cy="519.5" r="1.0" fill="#F0C040" opacity="0.85"/><circle cx="802.2" cy="515.8" r="1.2" fill="#9FC08A" opacity="0.85"/><circle cx="823.1" cy="517.7" r="1.2" fill="#F0C040" opacity="0.85"/><circle cx="795.9" cy="513.2" r="0.8" fill="#E58A3A" opacity="0.85"/><circle cx="819.1" cy="514.2" r="1.2" fill="#D9534F" opacity="0.85"/><circle cx="853.7" cy="515.2" r="0.9" fill="#D9534F" opacity="0.85"/><circle cx="809.4" cy="522.5" r="1.8" fill="#F0C040" opacity="0.85"/><circle cx="794.9" cy="516.8" r="1.4" fill="#C96C9C" opacity="0.85"/><circle cx="794.9" cy="518.0" r="1.6" fill="#9FC08A" opacity="0.85"/><circle cx="786.1" cy="521.0" r="1.1" fill="#E58A3A" opacity="0.85"/><circle cx="797.5" cy="515.1" r="1.1" fill="#6BA86B" opacity="0.85"/><circle cx="795.9" cy="515.1" r="1.0" fill="#E58A3A" opacity="0.85"/><circle cx="791.3" cy="513.2" r="1.1" fill="#F0C040" opacity="0.85"/><circle cx="816.2" cy="514.9" r="1.6" fill="#C96C9C" opacity="0.85"/><circle cx="812.8" cy="513.0" r="0.8" fill="#9FC08A" opacity="0.85"/><circle cx="794.6" cy="517.1" r="1.2" fill="#8A6FC0" opacity="0.85"/><circle cx="794.8" cy="513.1" r="1.4" fill="#9FC08A" opacity="0.85"/><circle cx="822.1" cy="521.9" r="1.2" fill="#9FC08A" opacity="0.85"/><circle cx="790.5" cy="518.6" r="1.6" fill="#C96C9C" opacity="0.85"/><circle cx="850.4" cy="513.7" r="1.4" fill="#E58A3A" opacity="0.85"/><circle cx="803.9" cy="513.0" r="1.1" fill="#D9534F" opacity="0.85"/><circle cx="792.5" cy="515.1" r="1.4" fill="#C96C9C" opacity="0.85"/><circle cx="847.9" cy="520.7" r="1.6" fill="#6BA86B" opacity="0.85"/><circle cx="829.5" cy="514.5" r="1.1" fill="#F0C040" opacity="0.85"/><circle cx="779.1" cy="517.6" r="1.3" fill="#6BA86B" opacity="0.85"/><circle cx="784.5" cy="516.6" r="1.4" fill="#C96C9C" opacity="0.85"/><circle cx="818.3" cy="519.1" r="1.2" fill="#8A6FC0" opacity="0.85"/><circle cx="808.6" cy="515.4" r="1.1" fill="#D9534F" opacity="0.85"/><circle cx="880.8" cy="475.3" r="0.9" fill="#BDBDBD" opacity="0.8"/><circle cx="876.7" cy="477.3" r="1.3" fill="#A8A8A8" opacity="0.8"/><circle cx="881.9" cy="473.6" r="1.4" fill="#BDBDBD" opacity="0.8"/><circle cx="889.0" cy="473.8" r="1.3" fill="#BDBDBD" opacity="0.8"/><circle cx="884.5" cy="473.2" r="1.3" fill="#A8A8A8" opacity="0.8"/><circle cx="876.6" cy="475.1" r="1.2" fill="#BDBDBD" opacity="0.8"/><circle cx="877.6" cy="475.8" r="0.9" fill="#A8A8A8" opacity="0.8"/><circle cx="878.4" cy="472.4" r="1.1" fill="#A8A8A8" opacity="0.8"/><circle cx="877.9" cy="474.5" r="1.3" fill="#A8A8A8" opacity="0.8"/><circle cx="880.6" cy="478.0" r="0.6" fill="#BDBDBD" opacity="0.8"/><circle cx="936.8" cy="515.7" r="1.2" fill="#A8A8A8" opacity="0.8"/><circle cx="945.1" cy="515.8" r="1.3" fill="#A8A8A8" opacity="0.8"/><circle cx="941.4" cy="518.2" r="1.2" fill="#A8A8A8" opacity="0.8"/><circle cx="944.0" cy="511.4" r="0.8" fill="#BDBDBD" opacity="0.8"/><circle cx="945.5" cy="511.2" r="0.9" fill="#A8A8A8" opacity="0.8"/><circle cx="935.9" cy="516.8" r="1.4" fill="#A8A8A8" opacity="0.8"/><circle cx="944.8" cy="518.0" r="1.2" fill="#BDBDBD" opacity="0.8"/><circle cx="934.0" cy="515.6" r="1.1" fill="#BDBDBD" opacity="0.8"/><circle cx="941.5" cy="512.7" r="0.8" fill="#BDBDBD" opacity="0.8"/><circle cx="941.6" cy="514.1" r="1.0" fill="#A8A8A8" opacity="0.8"/><circle cx="873.4" cy="371.5" r="1.4" fill="#B9A3CF" opacity="0.8"/><circle cx="882.6" cy="368.6" r="1.3" fill="#9B83B8" opacity="0.8"/><circle cx="883.1" cy="363.3" r="0.9" fill="#B9A3CF" opacity="0.8"/><circle cx="878.6" cy="359.0" r="1.3" fill="#8BA07A" opacity="0.8"/><circle cx="881.3" cy="358.3" r="1.0" fill="#8BA07A" opacity="0.8"/><circle cx="877.2" cy="367.8" r="0.9" fill="#8BA07A" opacity="0.8"/><circle cx="884.1" cy="366.8" r="1.7" fill="#9B83B8" opacity="0.8"/><circle cx="883.7" cy="371.6" r="1.7" fill="#9B83B8" opacity="0.8"/><circle cx="875.7" cy="371.4" r="1.4" fill="#9B83B8" opacity="0.8"/><circle cx="881.6" cy="367.8" r="1.1" fill="#B9A3CF" opacity="0.8"/><circle cx="880.7" cy="361.2" r="1.2" fill="#8BA07A" opacity="0.8"/><circle cx="876.7" cy="369.1" r="1.0" fill="#8BA07A" opacity="0.8"/><circle cx="885.0" cy="364.4" r="1.5" fill="#8BA07A" opacity="0.8"/><circle cx="879.5" cy="362.2" r="0.8" fill="#9B83B8" opacity="0.8"/><circle cx="940.9" cy="408.9" r="1.1" fill="#B9A3CF" opacity="0.8"/><circle cx="948.7" cy="401.4" r="1.7" fill="#9B83B8" opacity="0.8"/><circle cx="946.7" cy="399.5" r="1.8" fill="#B9A3CF" opacity="0.8"/><circle cx="943.3" cy="408.0" r="1.9" fill="#9B83B8" opacity="0.8"/><circle cx="938.4" cy="407.3" r="1.8" fill="#8BA07A" opacity="0.8"/><circle cx="947.2" cy="402.9" r="2.0" fill="#8BA07A" opacity="0.8"/><circle cx="936.7" cy="404.0" r="0.9" fill="#9B83B8" opacity="0.8"/><circle cx="937.2" cy="410.6" r="0.9" fill="#8BA07A" opacity="0.8"/><circle cx="938.5" cy="408.9" r="2.0" fill="#8BA07A" opacity="0.8"/><circle cx="949.3" cy="413.0" r="1.7" fill="#8BA07A" opacity="0.8"/><circle cx="934.9" cy="401.1" r="1.5" fill="#B9A3CF" opacity="0.8"/><circle cx="941.1" cy="404.5" r="0.9" fill="#B9A3CF" opacity="0.8"/><circle cx="938.0" cy="409.1" r="0.8" fill="#9B83B8" opacity="0.8"/><circle cx="943.5" cy="403.6" r="1.4" fill="#8BA07A" opacity="0.8"/><circle cx="973.8" cy="391.4" r="1.6" fill="#8DB694" opacity="0.8"/><circle cx="976.1" cy="405.1" r="1.0" fill="#8DB694" opacity="0.8"/><circle cx="985.2" cy="372.3" r="1.0" fill="#8DB694" opacity="0.8"/><circle cx="971.2" cy="366.8" r="1.7" fill="#A8CBAE" opacity="0.8"/><circle cx="976.6" cy="373.5" r="0.8" fill="#6E9E78" opacity="0.8"/><circle cx="983.3" cy="408.7" r="1.6" fill="#6E9E78" opacity="0.8"/><circle cx="977.3" cy="411.2" r="1.8" fill="#8DB694" opacity="0.8"/><circle cx="972.8" cy="358.7" r="0.9" fill="#8DB694" opacity="0.8"/><circle cx="976.7" cy="372.0" r="0.9" fill="#8DB694" opacity="0.8"/><circle cx="970.4" cy="389.6" r="2.1" fill="#8DB694" opacity="0.8"/><circle cx="976.8" cy="387.7" r="1.7" fill="#6E9E78" opacity="0.8"/><circle cx="980.5" cy="404.2" r="1.0" fill="#A8CBAE" opacity="0.8"/><circle cx="971.2" cy="393.8" r="2.2" fill="#6E9E78" opacity="0.8"/><circle cx="982.7" cy="398.8" r="0.8" fill="#A8CBAE" opacity="0.8"/><circle cx="982.1" cy="384.8" r="1.8" fill="#A8CBAE" opacity="0.8"/><circle cx="973.0" cy="414.5" r="1.2" fill="#6E9E78" opacity="0.8"/><circle cx="970.8" cy="377.5" r="1.8" fill="#6E9E78" opacity="0.8"/><circle cx="985.3" cy="373.4" r="0.9" fill="#6E9E78" opacity="0.8"/><circle cx="979.1" cy="383.1" r="1.9" fill="#6E9E78" opacity="0.8"/><circle cx="985.8" cy="375.3" r="2.1" fill="#8DB694" opacity="0.8"/><circle cx="971.6" cy="387.1" r="1.0" fill="#8DB694" opacity="0.8"/><circle cx="983.7" cy="370.1" r="1.0" fill="#A8CBAE" opacity="0.8"/><circle cx="973.3" cy="380.5" r="1.6" fill="#A8CBAE" opacity="0.8"/><circle cx="984.7" cy="394.0" r="1.8" fill="#6E9E78" opacity="0.8"/><circle cx="983.7" cy="388.7" r="1.5" fill="#6E9E78" opacity="0.8"/><circle cx="981.4" cy="406.7" r="1.4" fill="#6E9E78" opacity="0.8"/><circle cx="1036.5" cy="368.3" r="1.7" fill="#A8CBAE" opacity="0.8"/><circle cx="1041.9" cy="358.6" r="1.9" fill="#8DB694" opacity="0.8"/><circle cx="1033.7" cy="359.0" r="1.5" fill="#8DB694" opacity="0.8"/><circle cx="1038.0" cy="359.4" r="0.8" fill="#8DB694" opacity="0.8"/><circle cx="1035.1" cy="365.4" r="0.9" fill="#8DB694" opacity="0.8"/><circle cx="1043.5" cy="358.5" r="1.5" fill="#A8CBAE" opacity="0.8"/><circle cx="1036.0" cy="369.2" r="1.4" fill="#8DB694" opacity="0.8"/><circle cx="1045.5" cy="366.8" r="1.7" fill="#A8CBAE" opacity="0.8"/><circle cx="1068.5" cy="400.4" r="0.9" fill="#9FB59A" opacity="0.8"/><circle cx="1080.3" cy="413.1" r="1.7" fill="#9FB59A" opacity="0.8"/><circle cx="1078.6" cy="408.1" r="1.1" fill="#9FB59A" opacity="0.8"/><circle cx="1068.9" cy="411.0" r="1.6" fill="#C3D0BC" opacity="0.8"/><circle cx="1071.5" cy="404.3" r="0.8" fill="#C3D0BC" opacity="0.8"/><circle cx="1080.0" cy="397.6" r="1.7" fill="#C3D0BC" opacity="0.8"/><circle cx="1077.8" cy="407.5" r="1.4" fill="#C3D0BC" opacity="0.8"/><circle cx="1075.7" cy="397.3" r="1.3" fill="#C3D0BC" opacity="0.8"/><circle cx="1074.3" cy="398.5" r="1.4" fill="#9FB59A" opacity="0.8"/><circle cx="1074.5" cy="400.6" r="1.8" fill="#9FB59A" opacity="0.8"/><circle cx="1075.0" cy="401.9" r="1.3" fill="#7E9A7A" opacity="0.8"/><circle cx="1069.8" cy="410.4" r="2.0" fill="#9FB59A" opacity="0.8"/><circle cx="1134.9" cy="359.0" r="1.6" fill="#9FB59A" opacity="0.8"/><circle cx="1143.5" cy="366.0" r="1.9" fill="#C3D0BC" opacity="0.8"/><circle cx="1138.1" cy="359.9" r="1.8" fill="#9FB59A" opacity="0.8"/><circle cx="1137.0" cy="359.2" r="1.6" fill="#9FB59A" opacity="0.8"/><circle cx="1136.9" cy="371.6" r="1.5" fill="#9FB59A" opacity="0.8"/><circle cx="1138.8" cy="362.7" r="1.3" fill="#C3D0BC" opacity="0.8"/><circle cx="1142.5" cy="368.1" r="1.3" fill="#9FB59A" opacity="0.8"/><circle cx="1135.2" cy="361.9" r="1.3" fill="#9FB59A" opacity="0.8"/><circle cx="1135.3" cy="370.1" r="1.1" fill="#C3D0BC" opacity="0.8"/><circle cx="1131.8" cy="366.0" r="1.6" fill="#9FB59A" opacity="0.8"/><circle cx="1134.9" cy="405.3" r="1.0" fill="#C3D0BC" opacity="0.8"/><circle cx="1139.3" cy="411.1" r="1.0" fill="#C3D0BC" opacity="0.8"/><circle cx="1139.6" cy="404.3" r="1.1" fill="#C3D0BC" opacity="0.8"/><circle cx="1136.5" cy="413.1" r="1.1" fill="#9FB59A" opacity="0.8"/><circle cx="1133.7" cy="411.3" r="1.8" fill="#9FB59A" opacity="0.8"/><circle cx="1140.1" cy="414.3" r="1.7" fill="#C3D0BC" opacity="0.8"/><circle cx="1132.3" cy="405.3" r="1.0" fill="#9FB59A" opacity="0.8"/><circle cx="1132.3" cy="409.9" r="1.0" fill="#9FB59A" opacity="0.8"/><circle cx="1143.8" cy="411.8" r="1.7" fill="#C3D0BC" opacity="0.8"/><circle cx="1133.8" cy="402.2" r="1.9" fill="#C3D0BC" opacity="0.8"/><circle cx="878.4" cy="254.2" r="0.9" fill="#8CC2A0" opacity="0.8"/><circle cx="893.9" cy="254.9" r="1.2" fill="#B8D8C0" opacity="0.8"/><circle cx="880.5" cy="249.1" r="1.2" fill="#B8D8C0" opacity="0.8"/><circle cx="883.1" cy="259.2" r="2.3" fill="#8CC2A0" opacity="0.8"/><circle cx="890.2" cy="257.0" r="1.8" fill="#6FAE8E" opacity="0.8"/><circle cx="889.4" cy="257.9" r="2.2" fill="#B8D8C0" opacity="0.8"/><circle cx="890.2" cy="260.7" r="1.9" fill="#B8D8C0" opacity="0.8"/><circle cx="876.4" cy="254.9" r="1.2" fill="#B8D8C0" opacity="0.8"/><circle cx="875.7" cy="254.7" r="2.1" fill="#B8D8C0" opacity="0.8"/><circle cx="890.5" cy="251.0" r="2.2" fill="#8CC2A0" opacity="0.8"/><circle cx="884.3" cy="257.5" r="1.5" fill="#B8D8C0" opacity="0.8"/><circle cx="889.3" cy="261.0" r="2.2" fill="#8CC2A0" opacity="0.8"/><circle cx="892.1" cy="254.2" r="1.6" fill="#6FAE8E" opacity="0.8"/><circle cx="874.3" cy="256.4" r="1.1" fill="#6FAE8E" opacity="0.8"/><circle cx="885.9" cy="250.2" r="1.7" fill="#B8D8C0" opacity="0.8"/><circle cx="878.3" cy="255.5" r="0.8" fill="#8CC2A0" opacity="0.8"/><circle cx="885.9" cy="254.5" r="2.3" fill="#6FAE8E" opacity="0.8"/><circle cx="897.2" cy="251.4" r="1.6" fill="#6FAE8E" opacity="0.8"/><circle cx="945.0" cy="298.9" r="1.8" fill="#8CC2A0" opacity="0.8"/><circle cx="935.9" cy="295.0" r="0.8" fill="#8CC2A0" opacity="0.8"/><circle cx="948.7" cy="299.1" r="1.9" fill="#B8D8C0" opacity="0.8"/><circle cx="935.7" cy="291.8" r="2.0" fill="#B8D8C0" opacity="0.8"/><circle cx="949.8" cy="305.7" r="2.3" fill="#8CC2A0" opacity="0.8"/><circle cx="934.6" cy="290.1" r="2.0" fill="#B8D8C0" opacity="0.8"/><circle cx="934.3" cy="299.4" r="2.0" fill="#6FAE8E" opacity="0.8"/><circle cx="937.5" cy="299.3" r="2.1" fill="#8CC2A0" opacity="0.8"/><circle cx="939.8" cy="293.1" r="1.7" fill="#6FAE8E" opacity="0.8"/><circle cx="946.0" cy="296.2" r="2.1" fill="#6FAE8E" opacity="0.8"/><circle cx="935.7" cy="294.6" r="1.2" fill="#8CC2A0" opacity="0.8"/><circle cx="944.0" cy="296.5" r="2.1" fill="#8CC2A0" opacity="0.8"/><circle cx="937.6" cy="299.6" r="1.3" fill="#8CC2A0" opacity="0.8"/><circle cx="939.0" cy="299.3" r="1.9" fill="#8CC2A0" opacity="0.8"/><circle cx="933.5" cy="293.3" r="1.4" fill="#6FAE8E" opacity="0.8"/><circle cx="947.0" cy="304.1" r="2.1" fill="#6FAE8E" opacity="0.8"/><circle cx="941.0" cy="294.0" r="1.7" fill="#B8D8C0" opacity="0.8"/><circle cx="930.6" cy="304.9" r="1.8" fill="#8CC2A0" opacity="0.8"/><circle cx="1041.3" cy="260.2" r="1.5" fill="#7FA07F" opacity="0.8"/><circle cx="1043.0" cy="256.0" r="0.8" fill="#98B898" opacity="0.8"/><circle cx="1043.1" cy="252.8" r="1.5" fill="#7FA07F" opacity="0.8"/><circle cx="1041.9" cy="265.9" r="1.4" fill="#98B898" opacity="0.8"/><circle cx="1037.2" cy="262.3" r="1.1" fill="#98B898" opacity="0.8"/><circle cx="1041.9" cy="251.9" r="0.7" fill="#98B898" opacity="0.8"/><circle cx="1037.5" cy="252.3" r="1.1" fill="#7FA07F" opacity="0.8"/><circle cx="1040.0" cy="266.1" r="1.3" fill="#7FA07F" opacity="0.8"/><circle cx="1075.0" cy="297.5" r="1.8" fill="#F09AB0" opacity="0.8"/><circle cx="1069.6" cy="293.6" r="1.6" fill="#9CC0A8" opacity="0.8"/><circle cx="1077.6" cy="302.9" r="1.2" fill="#9CC0A8" opacity="0.8"/><circle cx="1083.0" cy="300.0" r="1.0" fill="#9CC0A8" opacity="0.8"/><circle cx="1077.2" cy="288.3" r="1.5" fill="#9CC0A8" opacity="0.8"/><circle cx="1079.9" cy="289.5" r="1.4" fill="#F09AB0" opacity="0.8"/><circle cx="1067.5" cy="300.7" r="1.6" fill="#9CC0A8" opacity="0.8"/><circle cx="1068.5" cy="299.7" r="1.2" fill="#F09AB0" opacity="0.8"/><circle cx="1071.5" cy="294.0" r="1.1" fill="#F09AB0" opacity="0.8"/><circle cx="1080.2" cy="293.1" r="1.8" fill="#9CC0A8" opacity="0.8"/><circle cx="1132.0" cy="260.6" r="1.8" fill="#E68AA0" opacity="0.8"/><circle cx="1143.5" cy="256.7" r="1.8" fill="#E68AA0" opacity="0.8"/><circle cx="1129.5" cy="257.4" r="1.0" fill="#F09AB0" opacity="0.8"/><circle cx="1140.1" cy="249.3" r="1.7" fill="#E68AA0" opacity="0.8"/><circle cx="1135.8" cy="249.4" r="1.2" fill="#F09AB0" opacity="0.8"/><circle cx="1126.8" cy="258.7" r="1.4" fill="#F09AB0" opacity="0.8"/><circle cx="1140.2" cy="259.7" r="1.5" fill="#F09AB0" opacity="0.8"/><circle cx="1137.3" cy="257.2" r="1.5" fill="#F09AB0" opacity="0.8"/><circle cx="1129.8" cy="256.8" r="1.3" fill="#F09AB0" opacity="0.8"/><circle cx="1127.8" cy="251.0" r="0.8" fill="#F09AB0" opacity="0.8"/></g></svg>
<div class="a" style="left:1158px;top:239px;width:14px;height:316px;background:#F0F0F0"></div>
<div class="a" style="left:1159px;top:254px;width:12px;height:172px;background:#CDCDCD"></div>
<svg style="left:0;top:0" width="1200" height="630">
 <path d="M1161.5 250 L1164.5 247 L1167.5 250" stroke="#606060" stroke-width="1.5" fill="none"/>
 <path d="M1161.5 546 L1164.5 549 L1167.5 546" stroke="#606060" stroke-width="1.5" fill="none"/>
</svg>
<div class="t" style="left:456.50px;top:567.00px;font-size:11px;color:#1A1A1A;letter-spacing:-0.486px;">File name:</div>
<div class="a" style="left:508px;top:562px;width:473px;height:21px;background:#fff;border:1px solid #7A7A7A"></div>
<div class="t" style="left:511.00px;top:567.00px;font-size:11px;color:#1A1A1A;letter-spacing:0.078px;">nen-powerpoint-don-gian-tinh-te-64</div>
<div class="a" style="left:992px;top:562px;width:165px;height:21px;background:#E5E5E5;border:1px solid #ADADAD"></div>
<div class="t" style="left:996.00px;top:567.00px;font-size:11px;color:#1A1A1A;letter-spacing:-0.636px;">All Pictures</div>
<div class="a" style="left:1080px;top:589px;width:76px;height:21px;background:#E1E1E1;border:1px solid #ADADAD"></div>
<div class="t" style="left:1102.50px;top:593.00px;font-size:11px;color:#1A1A1A;letter-spacing:-0.853px;">Cancel</div>
<div class="a" style="left:992.5px;top:589px;width:76px;height:21px;background:#E1E1E1;border:2px solid #2E6DAF"></div>
<div class="a" style="left:994.5px;top:591px;width:72px;height:17px;border:1px solid #BFE0F5"></div>
<div class="t" style="left:1012.00px;top:593.00px;font-size:11px;color:#1A1A1A;letter-spacing:-0.600px;">Insert</div>
<div class="a" style="left:1055px;top:593px;width:1px;height:13px;background:#555"></div>
<div class="t" style="left:932.50px;top:594.00px;font-size:11px;color:#1A1A1A;letter-spacing:-0.546px;">Tools</div>
<svg style="left:0;top:0" width="1200" height="630">
 <path d="M966.5 575.5 L970 579 L973.5 575.5" stroke="#555" stroke-width="1.1" fill="none"/>
 <path d="M1144.5 571.5 L1148 575 L1151.5 571.5" stroke="#555" stroke-width="1.1" fill="none"/>
 <path d="M971.5 597 H977.5 L974.5 600.5 Z" fill="#222"/>
 <path d="M1058.5 597 H1065.5 L1062 601 Z" fill="#111"/>
 <g fill="#B5B5B5"><rect x="1166" y="614" width="1.5" height="1.5"/><rect x="1163" y="614" width="1.5" height="1.5"/><rect x="1166" y="611" width="1.5" height="1.5"/><rect x="1160" y="614" width="1.5" height="1.5"/><rect x="1163" y="611" width="1.5" height="1.5"/><rect x="1166" y="608" width="1.5" height="1.5"/></g>
 <path d="M953 631 L983.5 607" stroke="#E5141B" stroke-width="2.6"/>
 <path d="M991.5 600.8 L979 605.2 L985.8 612 Z" fill="#E5141B"/>
</svg>
</body></html>
